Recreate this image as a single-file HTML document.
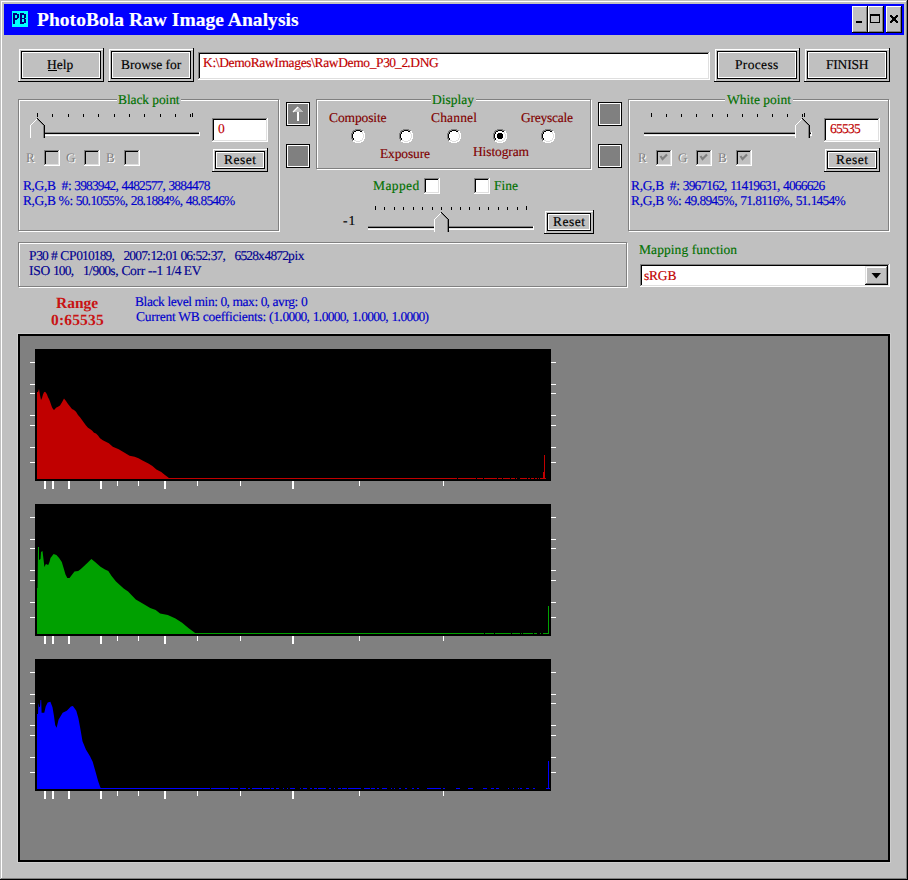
<!DOCTYPE html>
<html><head><meta charset="utf-8"><style>
html,body{margin:0;padding:0;}
body{width:908px;height:880px;position:relative;overflow:hidden;background:#c0c0c0;font-family:"Liberation Serif",serif;}
i{position:absolute;display:block;}
.t{position:absolute;white-space:pre;font-weight:normal;-webkit-text-stroke:0.15px currentColor;}
svg{overflow:visible}
</style></head><body>
<i style="left:0px;top:0px;width:908px;height:1px;background:#c0c0c0;"></i><i style="left:0px;top:0px;width:1px;height:880px;background:#c0c0c0;"></i><i style="left:1px;top:1px;width:906px;height:1px;background:#ffffff;"></i><i style="left:1px;top:1px;width:1px;height:878px;background:#ffffff;"></i><i style="left:0px;top:879px;width:908px;height:1px;background:#000000;"></i><i style="left:907px;top:0px;width:1px;height:880px;background:#000000;"></i><i style="left:1px;top:878px;width:906px;height:1px;background:#808080;"></i><i style="left:906px;top:1px;width:1px;height:878px;background:#808080;"></i><i style="left:4px;top:4px;width:900px;height:31px;background:#0000ff;"></i><i style="left:12px;top:11px;width:16px;height:16px;background:#00ffff;"></i><i style="left:13px;top:13px;width:2px;height:11px;background:#000080;"></i><i style="left:13px;top:13px;width:4px;height:1px;background:#000080;"></i><i style="left:13px;top:14px;width:6px;height:1px;background:#000080;"></i><i style="left:17px;top:15px;width:2px;height:3px;background:#000080;"></i><i style="left:13px;top:18px;width:5px;height:1px;background:#000080;"></i><i style="left:13px;top:19px;width:4px;height:1px;background:#000080;"></i><i style="left:20px;top:13px;width:2px;height:11px;background:#000080;"></i><i style="left:20px;top:13px;width:4px;height:1px;background:#000080;"></i><i style="left:20px;top:14px;width:6px;height:1px;background:#000080;"></i><i style="left:24px;top:15px;width:2px;height:3px;background:#000080;"></i><i style="left:20px;top:18px;width:5px;height:1px;background:#000080;"></i><i style="left:24px;top:19px;width:2px;height:3px;background:#000080;"></i><i style="left:20px;top:22px;width:6px;height:1px;background:#000080;"></i><i style="left:20px;top:23px;width:4px;height:1px;background:#000080;"></i><b class="t" style="left:37px;top:10px;color:#fff;font-size:19.5px;line-height:20px;font-weight:bold;letter-spacing:0.037px;">PhotoBola Raw Image Analysis</b><i style="left:852px;top:6px;width:16px;height:27px;background:#000000;"></i><i style="left:852px;top:6px;width:15px;height:26px;background:#ffffff;"></i><i style="left:853px;top:7px;width:14px;height:25px;background:#808080;"></i><i style="left:853px;top:7px;width:13px;height:24px;background:#c0c0c0;"></i><i style="left:868px;top:6px;width:16px;height:27px;background:#000000;"></i><i style="left:868px;top:6px;width:15px;height:26px;background:#ffffff;"></i><i style="left:869px;top:7px;width:14px;height:25px;background:#808080;"></i><i style="left:869px;top:7px;width:13px;height:24px;background:#c0c0c0;"></i><i style="left:886px;top:6px;width:16px;height:27px;background:#000000;"></i><i style="left:886px;top:6px;width:15px;height:26px;background:#ffffff;"></i><i style="left:887px;top:7px;width:14px;height:25px;background:#808080;"></i><i style="left:887px;top:7px;width:13px;height:24px;background:#c0c0c0;"></i><i style="left:856px;top:21px;width:6px;height:2px;background:#000000;"></i><i style="left:870px;top:14px;width:10px;height:1px;background:#000000;"></i><i style="left:870px;top:22px;width:10px;height:1px;background:#000000;"></i><i style="left:870px;top:14px;width:1px;height:9px;background:#000000;"></i><i style="left:879px;top:14px;width:1px;height:9px;background:#000000;"></i><i style="left:870px;top:15px;width:10px;height:1px;background:#000000;"></i><i style="left:890px;top:15px;width:1px;height:1px;background:#000000;"></i><i style="left:891px;top:15px;width:1px;height:1px;background:#000000;"></i><i style="left:896px;top:15px;width:1px;height:1px;background:#000000;"></i><i style="left:897px;top:15px;width:1px;height:1px;background:#000000;"></i><i style="left:890px;top:16px;width:1px;height:1px;background:#000000;"></i><i style="left:891px;top:16px;width:1px;height:1px;background:#000000;"></i><i style="left:892px;top:16px;width:1px;height:1px;background:#000000;"></i><i style="left:895px;top:16px;width:1px;height:1px;background:#000000;"></i><i style="left:896px;top:16px;width:1px;height:1px;background:#000000;"></i><i style="left:897px;top:16px;width:1px;height:1px;background:#000000;"></i><i style="left:891px;top:17px;width:1px;height:1px;background:#000000;"></i><i style="left:892px;top:17px;width:1px;height:1px;background:#000000;"></i><i style="left:893px;top:17px;width:1px;height:1px;background:#000000;"></i><i style="left:894px;top:17px;width:1px;height:1px;background:#000000;"></i><i style="left:895px;top:17px;width:1px;height:1px;background:#000000;"></i><i style="left:896px;top:17px;width:1px;height:1px;background:#000000;"></i><i style="left:892px;top:18px;width:1px;height:1px;background:#000000;"></i><i style="left:893px;top:18px;width:1px;height:1px;background:#000000;"></i><i style="left:894px;top:18px;width:1px;height:1px;background:#000000;"></i><i style="left:895px;top:18px;width:1px;height:1px;background:#000000;"></i><i style="left:892px;top:19px;width:1px;height:1px;background:#000000;"></i><i style="left:893px;top:19px;width:1px;height:1px;background:#000000;"></i><i style="left:894px;top:19px;width:1px;height:1px;background:#000000;"></i><i style="left:895px;top:19px;width:1px;height:1px;background:#000000;"></i><i style="left:891px;top:20px;width:1px;height:1px;background:#000000;"></i><i style="left:892px;top:20px;width:1px;height:1px;background:#000000;"></i><i style="left:893px;top:20px;width:1px;height:1px;background:#000000;"></i><i style="left:894px;top:20px;width:1px;height:1px;background:#000000;"></i><i style="left:895px;top:20px;width:1px;height:1px;background:#000000;"></i><i style="left:896px;top:20px;width:1px;height:1px;background:#000000;"></i><i style="left:890px;top:21px;width:1px;height:1px;background:#000000;"></i><i style="left:891px;top:21px;width:1px;height:1px;background:#000000;"></i><i style="left:892px;top:21px;width:1px;height:1px;background:#000000;"></i><i style="left:895px;top:21px;width:1px;height:1px;background:#000000;"></i><i style="left:896px;top:21px;width:1px;height:1px;background:#000000;"></i><i style="left:897px;top:21px;width:1px;height:1px;background:#000000;"></i><i style="left:890px;top:22px;width:1px;height:1px;background:#000000;"></i><i style="left:891px;top:22px;width:1px;height:1px;background:#000000;"></i><i style="left:896px;top:22px;width:1px;height:1px;background:#000000;"></i><i style="left:897px;top:22px;width:1px;height:1px;background:#000000;"></i><i style="left:18px;top:81px;width:86px;height:1px;background:#000000;"></i><i style="left:103px;top:48px;width:1px;height:34px;background:#000000;"></i><i style="left:19px;top:49px;width:84px;height:1px;background:#ffffff;"></i><i style="left:19px;top:49px;width:1px;height:32px;background:#ffffff;"></i><i style="left:21px;top:51px;width:80px;height:1px;background:#000000;"></i><i style="left:21px;top:78px;width:80px;height:1px;background:#000000;"></i><i style="left:21px;top:51px;width:1px;height:28px;background:#000000;"></i><i style="left:100px;top:51px;width:1px;height:28px;background:#000000;"></i><i style="left:22px;top:52px;width:78px;height:1px;background:#ffffff;"></i><i style="left:22px;top:77px;width:78px;height:1px;background:#ffffff;"></i><i style="left:22px;top:52px;width:1px;height:26px;background:#ffffff;"></i><i style="left:99px;top:52px;width:1px;height:26px;background:#ffffff;"></i><b class="t" style="left:47px;top:58px;color:#000;font-size:13.5px;line-height:14px;text-rendering:geometricPrecision;">Help</b><i style="left:48px;top:70px;width:9px;height:1px;background:#000000;"></i><i style="left:108px;top:81px;width:86px;height:1px;background:#000000;"></i><i style="left:193px;top:48px;width:1px;height:34px;background:#000000;"></i><i style="left:109px;top:49px;width:84px;height:1px;background:#ffffff;"></i><i style="left:109px;top:49px;width:1px;height:32px;background:#ffffff;"></i><i style="left:111px;top:51px;width:80px;height:1px;background:#000000;"></i><i style="left:111px;top:78px;width:80px;height:1px;background:#000000;"></i><i style="left:111px;top:51px;width:1px;height:28px;background:#000000;"></i><i style="left:190px;top:51px;width:1px;height:28px;background:#000000;"></i><i style="left:112px;top:52px;width:78px;height:1px;background:#ffffff;"></i><i style="left:112px;top:77px;width:78px;height:1px;background:#ffffff;"></i><i style="left:112px;top:52px;width:1px;height:26px;background:#ffffff;"></i><i style="left:189px;top:52px;width:1px;height:26px;background:#ffffff;"></i><b class="t" style="left:121px;top:58px;color:#000;font-size:13.5px;line-height:14px;text-rendering:geometricPrecision;">Browse for</b><i style="left:714px;top:81px;width:86px;height:1px;background:#000000;"></i><i style="left:799px;top:48px;width:1px;height:34px;background:#000000;"></i><i style="left:715px;top:49px;width:84px;height:1px;background:#ffffff;"></i><i style="left:715px;top:49px;width:1px;height:32px;background:#ffffff;"></i><i style="left:717px;top:51px;width:80px;height:1px;background:#000000;"></i><i style="left:717px;top:78px;width:80px;height:1px;background:#000000;"></i><i style="left:717px;top:51px;width:1px;height:28px;background:#000000;"></i><i style="left:796px;top:51px;width:1px;height:28px;background:#000000;"></i><i style="left:718px;top:52px;width:78px;height:1px;background:#ffffff;"></i><i style="left:718px;top:77px;width:78px;height:1px;background:#ffffff;"></i><i style="left:718px;top:52px;width:1px;height:26px;background:#ffffff;"></i><i style="left:795px;top:52px;width:1px;height:26px;background:#ffffff;"></i><b class="t" style="left:735px;top:58px;color:#000;font-size:13.5px;line-height:14px;letter-spacing:0.333px;text-rendering:geometricPrecision;">Process</b><i style="left:804px;top:81px;width:86px;height:1px;background:#000000;"></i><i style="left:889px;top:48px;width:1px;height:34px;background:#000000;"></i><i style="left:805px;top:49px;width:84px;height:1px;background:#ffffff;"></i><i style="left:805px;top:49px;width:1px;height:32px;background:#ffffff;"></i><i style="left:807px;top:51px;width:80px;height:1px;background:#000000;"></i><i style="left:807px;top:78px;width:80px;height:1px;background:#000000;"></i><i style="left:807px;top:51px;width:1px;height:28px;background:#000000;"></i><i style="left:886px;top:51px;width:1px;height:28px;background:#000000;"></i><i style="left:808px;top:52px;width:78px;height:1px;background:#ffffff;"></i><i style="left:808px;top:77px;width:78px;height:1px;background:#ffffff;"></i><i style="left:808px;top:52px;width:1px;height:26px;background:#ffffff;"></i><i style="left:885px;top:52px;width:1px;height:26px;background:#ffffff;"></i><b class="t" style="left:826px;top:58px;color:#000;font-size:13.5px;line-height:14px;letter-spacing:-0.2px;text-rendering:geometricPrecision;">FINISH</b><i style="left:198px;top:52px;width:512px;height:28px;background:#ffffff;"></i><i style="left:198px;top:52px;width:512px;height:1px;background:#808080;"></i><i style="left:198px;top:52px;width:1px;height:28px;background:#808080;"></i><i style="left:199px;top:53px;width:510px;height:1px;background:#000000;"></i><i style="left:199px;top:53px;width:1px;height:26px;background:#000000;"></i><i style="left:198px;top:79px;width:512px;height:1px;background:#ffffff;"></i><i style="left:709px;top:52px;width:1px;height:28px;background:#ffffff;"></i><i style="left:199px;top:78px;width:510px;height:1px;background:#dfdfdf;"></i><i style="left:708px;top:53px;width:1px;height:26px;background:#dfdfdf;"></i><b class="t" style="left:203px;top:56px;color:#c00000;font-size:13.5px;line-height:14px;letter-spacing:-0.364px;text-rendering:geometricPrecision;">K:\DemoRawImages\RawDemo_P<span style="letter-spacing:-0.864px">30</span>_<span style="letter-spacing:-0.864px">2</span>.DNG</b><i style="left:19px;top:100px;width:261px;height:1px;background:#ffffff;"></i><i style="left:19px;top:231px;width:261px;height:1px;background:#ffffff;"></i><i style="left:19px;top:100px;width:1px;height:132px;background:#ffffff;"></i><i style="left:279px;top:100px;width:1px;height:132px;background:#ffffff;"></i><i style="left:18px;top:99px;width:261px;height:1px;background:#808080;"></i><i style="left:18px;top:230px;width:261px;height:1px;background:#808080;"></i><i style="left:18px;top:99px;width:1px;height:132px;background:#808080;"></i><i style="left:278px;top:99px;width:1px;height:132px;background:#808080;"></i><i style="left:117px;top:99px;width:64px;height:2px;background:#c0c0c0;"></i><b class="t" style="left:118px;top:93px;color:#007000;font-size:13.5px;line-height:14px;letter-spacing:-0.1px;text-rendering:geometricPrecision;">Black point</b><i style="left:30px;top:132px;width:170px;height:1px;background:#808080;"></i><i style="left:30px;top:133px;width:170px;height:1px;background:#000000;"></i><i style="left:30px;top:134px;width:170px;height:1px;background:#dfdfdf;"></i><i style="left:30px;top:135px;width:170px;height:1px;background:#ffffff;"></i><i style="left:199px;top:132px;width:1px;height:4px;background:#ffffff;"></i><i style="left:37px;top:113px;width:1px;height:4px;background:#000000;"></i><i style="left:52px;top:114px;width:1px;height:3px;background:#000000;"></i><i style="left:68px;top:114px;width:1px;height:3px;background:#000000;"></i><i style="left:83px;top:114px;width:1px;height:3px;background:#000000;"></i><i style="left:98px;top:114px;width:1px;height:3px;background:#000000;"></i><i style="left:114px;top:114px;width:1px;height:3px;background:#000000;"></i><i style="left:129px;top:114px;width:1px;height:3px;background:#000000;"></i><i style="left:144px;top:114px;width:1px;height:3px;background:#000000;"></i><i style="left:160px;top:114px;width:1px;height:3px;background:#000000;"></i><i style="left:175px;top:114px;width:1px;height:3px;background:#000000;"></i><i style="left:190px;top:114px;width:1px;height:3px;background:#000000;"></i><i style="left:192px;top:113px;width:1px;height:4px;background:#000000;"></i><i style="left:30px;top:125px;width:15px;height:13px;background:#c0c0c0;"></i><i style="left:37px;top:118px;width:1px;height:1px;background:#c0c0c0;"></i><i style="left:36px;top:119px;width:3px;height:1px;background:#c0c0c0;"></i><i style="left:35px;top:120px;width:5px;height:1px;background:#c0c0c0;"></i><i style="left:34px;top:121px;width:7px;height:1px;background:#c0c0c0;"></i><i style="left:33px;top:122px;width:9px;height:1px;background:#c0c0c0;"></i><i style="left:32px;top:123px;width:11px;height:1px;background:#c0c0c0;"></i><i style="left:31px;top:124px;width:13px;height:1px;background:#c0c0c0;"></i><i style="left:37px;top:118px;width:1px;height:1px;background:#ffffff;"></i><i style="left:37px;top:118px;width:1px;height:1px;background:#000000;"></i><i style="left:36px;top:119px;width:1px;height:1px;background:#ffffff;"></i><i style="left:38px;top:119px;width:1px;height:1px;background:#000000;"></i><i style="left:37px;top:119px;width:1px;height:1px;background:#808080;"></i><i style="left:35px;top:120px;width:1px;height:1px;background:#ffffff;"></i><i style="left:39px;top:120px;width:1px;height:1px;background:#000000;"></i><i style="left:38px;top:120px;width:1px;height:1px;background:#808080;"></i><i style="left:34px;top:121px;width:1px;height:1px;background:#ffffff;"></i><i style="left:40px;top:121px;width:1px;height:1px;background:#000000;"></i><i style="left:39px;top:121px;width:1px;height:1px;background:#808080;"></i><i style="left:33px;top:122px;width:1px;height:1px;background:#ffffff;"></i><i style="left:41px;top:122px;width:1px;height:1px;background:#000000;"></i><i style="left:40px;top:122px;width:1px;height:1px;background:#808080;"></i><i style="left:32px;top:123px;width:1px;height:1px;background:#ffffff;"></i><i style="left:42px;top:123px;width:1px;height:1px;background:#000000;"></i><i style="left:41px;top:123px;width:1px;height:1px;background:#808080;"></i><i style="left:31px;top:124px;width:1px;height:1px;background:#ffffff;"></i><i style="left:43px;top:124px;width:1px;height:1px;background:#000000;"></i><i style="left:42px;top:124px;width:1px;height:1px;background:#808080;"></i><i style="left:30px;top:125px;width:1px;height:1px;background:#ffffff;"></i><i style="left:44px;top:125px;width:1px;height:1px;background:#000000;"></i><i style="left:43px;top:125px;width:1px;height:1px;background:#808080;"></i><i style="left:30px;top:125px;width:1px;height:13px;background:#ffffff;"></i><i style="left:44px;top:125px;width:1px;height:13px;background:#000000;"></i><i style="left:43px;top:126px;width:1px;height:12px;background:#808080;"></i><i style="left:212px;top:118px;width:56px;height:24px;background:#ffffff;"></i><i style="left:212px;top:118px;width:56px;height:1px;background:#808080;"></i><i style="left:212px;top:118px;width:1px;height:24px;background:#808080;"></i><i style="left:213px;top:119px;width:54px;height:1px;background:#000000;"></i><i style="left:213px;top:119px;width:1px;height:22px;background:#000000;"></i><i style="left:212px;top:141px;width:56px;height:1px;background:#ffffff;"></i><i style="left:267px;top:118px;width:1px;height:24px;background:#ffffff;"></i><i style="left:213px;top:140px;width:54px;height:1px;background:#dfdfdf;"></i><i style="left:266px;top:119px;width:1px;height:22px;background:#dfdfdf;"></i><b class="t" style="left:218px;top:122px;color:#c00000;font-size:13.5px;line-height:14px;letter-spacing:2.0px;text-rendering:geometricPrecision;">0</b><i style="left:212px;top:171px;width:56px;height:1px;background:#000000;"></i><i style="left:267px;top:148px;width:1px;height:24px;background:#000000;"></i><i style="left:213px;top:149px;width:54px;height:1px;background:#ffffff;"></i><i style="left:213px;top:149px;width:1px;height:22px;background:#ffffff;"></i><i style="left:215px;top:151px;width:50px;height:1px;background:#000000;"></i><i style="left:215px;top:168px;width:50px;height:1px;background:#000000;"></i><i style="left:215px;top:151px;width:1px;height:18px;background:#000000;"></i><i style="left:264px;top:151px;width:1px;height:18px;background:#000000;"></i><i style="left:216px;top:152px;width:48px;height:1px;background:#ffffff;"></i><i style="left:216px;top:167px;width:48px;height:1px;background:#ffffff;"></i><i style="left:216px;top:152px;width:1px;height:16px;background:#ffffff;"></i><i style="left:263px;top:152px;width:1px;height:16px;background:#ffffff;"></i><b class="t" style="left:224px;top:153px;color:#000;font-size:13.5px;line-height:14px;letter-spacing:0.5px;text-rendering:geometricPrecision;">Reset</b><b class="t" style="left:27px;top:152px;color:#ffffff;font-size:13px;line-height:13px;-webkit-text-stroke:0;text-rendering:geometricPrecision;">R</b><b class="t" style="left:26px;top:151px;color:#808080;font-size:13px;line-height:13px;-webkit-text-stroke:0;text-rendering:geometricPrecision;">R</b><i style="left:44px;top:150px;width:16px;height:16px;background:#c0c0c0;"></i><i style="left:44px;top:150px;width:16px;height:1px;background:#808080;"></i><i style="left:44px;top:150px;width:1px;height:16px;background:#808080;"></i><i style="left:45px;top:151px;width:14px;height:1px;background:#000000;"></i><i style="left:45px;top:151px;width:1px;height:14px;background:#000000;"></i><i style="left:44px;top:165px;width:16px;height:1px;background:#ffffff;"></i><i style="left:59px;top:150px;width:1px;height:16px;background:#ffffff;"></i><i style="left:45px;top:164px;width:14px;height:1px;background:#dfdfdf;"></i><i style="left:58px;top:151px;width:1px;height:14px;background:#dfdfdf;"></i><b class="t" style="left:67px;top:152px;color:#ffffff;font-size:13px;line-height:13px;-webkit-text-stroke:0;text-rendering:geometricPrecision;">G</b><b class="t" style="left:66px;top:151px;color:#808080;font-size:13px;line-height:13px;-webkit-text-stroke:0;text-rendering:geometricPrecision;">G</b><i style="left:84px;top:150px;width:16px;height:16px;background:#c0c0c0;"></i><i style="left:84px;top:150px;width:16px;height:1px;background:#808080;"></i><i style="left:84px;top:150px;width:1px;height:16px;background:#808080;"></i><i style="left:85px;top:151px;width:14px;height:1px;background:#000000;"></i><i style="left:85px;top:151px;width:1px;height:14px;background:#000000;"></i><i style="left:84px;top:165px;width:16px;height:1px;background:#ffffff;"></i><i style="left:99px;top:150px;width:1px;height:16px;background:#ffffff;"></i><i style="left:85px;top:164px;width:14px;height:1px;background:#dfdfdf;"></i><i style="left:98px;top:151px;width:1px;height:14px;background:#dfdfdf;"></i><b class="t" style="left:107px;top:152px;color:#ffffff;font-size:13px;line-height:13px;-webkit-text-stroke:0;text-rendering:geometricPrecision;">B</b><b class="t" style="left:106px;top:151px;color:#808080;font-size:13px;line-height:13px;-webkit-text-stroke:0;text-rendering:geometricPrecision;">B</b><i style="left:124px;top:150px;width:16px;height:16px;background:#c0c0c0;"></i><i style="left:124px;top:150px;width:16px;height:1px;background:#808080;"></i><i style="left:124px;top:150px;width:1px;height:16px;background:#808080;"></i><i style="left:125px;top:151px;width:14px;height:1px;background:#000000;"></i><i style="left:125px;top:151px;width:1px;height:14px;background:#000000;"></i><i style="left:124px;top:165px;width:16px;height:1px;background:#ffffff;"></i><i style="left:139px;top:150px;width:1px;height:16px;background:#ffffff;"></i><i style="left:125px;top:164px;width:14px;height:1px;background:#dfdfdf;"></i><i style="left:138px;top:151px;width:1px;height:14px;background:#dfdfdf;"></i><b class="t" style="left:23px;top:179px;color:#0000cc;font-size:13.5px;line-height:14px;letter-spacing:-0.382px;text-rendering:geometricPrecision;">R,G,B  #: <span style="letter-spacing:-0.882px">3983942</span>, <span style="letter-spacing:-0.882px">4482577</span>, <span style="letter-spacing:-0.882px">3884478</span></b><b class="t" style="left:23px;top:194px;color:#0000cc;font-size:13.5px;line-height:14px;letter-spacing:-0.389px;text-rendering:geometricPrecision;">R,G,B %: <span style="letter-spacing:-0.889px">50</span>.<span style="letter-spacing:-0.889px">1055</span>%, <span style="letter-spacing:-0.889px">28</span>.<span style="letter-spacing:-0.889px">1884</span>%, <span style="letter-spacing:-0.889px">48</span>.<span style="letter-spacing:-0.889px">8546</span>%</b><i style="left:286px;top:102px;width:24px;height:24px;background:#000000;"></i><i style="left:287px;top:103px;width:22px;height:22px;background:#ffffff;"></i><i style="left:288px;top:104px;width:20px;height:20px;background:#808080;"></i><i style="left:286px;top:144px;width:24px;height:24px;background:#000000;"></i><i style="left:287px;top:145px;width:22px;height:22px;background:#ffffff;"></i><i style="left:288px;top:146px;width:20px;height:20px;background:#808080;"></i><i style="left:598px;top:102px;width:24px;height:24px;background:#000000;"></i><i style="left:599px;top:103px;width:22px;height:22px;background:#ffffff;"></i><i style="left:600px;top:104px;width:20px;height:20px;background:#808080;"></i><i style="left:598px;top:144px;width:24px;height:24px;background:#000000;"></i><i style="left:599px;top:145px;width:22px;height:22px;background:#ffffff;"></i><i style="left:600px;top:146px;width:20px;height:20px;background:#808080;"></i><svg style="position:absolute;left:288px;top:104px" width="20" height="20" shape-rendering="crispEdges"><polygon points="10,3 15,8 5,8" fill="#c0c0c0"/><path d="M10 3 L5 8" stroke="#fff" stroke-width="1.2" fill="none" shape-rendering="auto"/><rect x="9" y="8" width="2" height="9" fill="#fff"/></svg><i style="left:317px;top:100px;width:275px;height:1px;background:#ffffff;"></i><i style="left:317px;top:169px;width:275px;height:1px;background:#ffffff;"></i><i style="left:317px;top:100px;width:1px;height:70px;background:#ffffff;"></i><i style="left:591px;top:100px;width:1px;height:70px;background:#ffffff;"></i><i style="left:316px;top:99px;width:275px;height:1px;background:#808080;"></i><i style="left:316px;top:168px;width:275px;height:1px;background:#808080;"></i><i style="left:316px;top:99px;width:1px;height:70px;background:#808080;"></i><i style="left:590px;top:99px;width:1px;height:70px;background:#808080;"></i><i style="left:431px;top:99px;width:45px;height:2px;background:#c0c0c0;"></i><b class="t" style="left:432px;top:93px;color:#007000;font-size:13.5px;line-height:14px;text-rendering:geometricPrecision;">Display</b><b class="t" style="left:329px;top:111px;color:#800000;font-size:13.5px;line-height:14px;letter-spacing:-0.125px;text-rendering:geometricPrecision;">Composite</b><b class="t" style="left:431px;top:111px;color:#800000;font-size:13.5px;line-height:14px;letter-spacing:0.167px;text-rendering:geometricPrecision;">Channel</b><b class="t" style="left:521px;top:111px;color:#800000;font-size:13.5px;line-height:14px;letter-spacing:-0.25px;text-rendering:geometricPrecision;">Greyscale</b><b class="t" style="left:380px;top:147px;color:#800000;font-size:13.5px;line-height:14px;letter-spacing:-0.143px;text-rendering:geometricPrecision;">Exposure</b><b class="t" style="left:473px;top:145px;color:#800000;font-size:13.5px;line-height:14px;letter-spacing:-0.125px;text-rendering:geometricPrecision;">Histogram</b><svg style="position:absolute;left:350px;top:128px" width="16" height="16" shape-rendering="crispEdges"><rect x="5" y="1" width="1" height="1" fill="#808080"/><rect x="6" y="1" width="1" height="1" fill="#808080"/><rect x="7" y="1" width="1" height="1" fill="#808080"/><rect x="8" y="1" width="1" height="1" fill="#808080"/><rect x="9" y="1" width="1" height="1" fill="#808080"/><rect x="10" y="1" width="1" height="1" fill="#808080"/><rect x="3" y="2" width="1" height="1" fill="#808080"/><rect x="4" y="2" width="1" height="1" fill="#808080"/><rect x="5" y="2" width="1" height="1" fill="#808080"/><rect x="6" y="2" width="1" height="1" fill="#000000"/><rect x="7" y="2" width="1" height="1" fill="#000000"/><rect x="8" y="2" width="1" height="1" fill="#000000"/><rect x="9" y="2" width="1" height="1" fill="#000000"/><rect x="10" y="2" width="1" height="1" fill="#808080"/><rect x="11" y="2" width="1" height="1" fill="#808080"/><rect x="12" y="2" width="1" height="1" fill="#808080"/><rect x="2" y="3" width="1" height="1" fill="#808080"/><rect x="3" y="3" width="1" height="1" fill="#808080"/><rect x="4" y="3" width="1" height="1" fill="#000000"/><rect x="5" y="3" width="1" height="1" fill="#000000"/><rect x="6" y="3" width="1" height="1" fill="#ffffff"/><rect x="7" y="3" width="1" height="1" fill="#ffffff"/><rect x="8" y="3" width="1" height="1" fill="#ffffff"/><rect x="9" y="3" width="1" height="1" fill="#ffffff"/><rect x="10" y="3" width="1" height="1" fill="#000000"/><rect x="11" y="3" width="1" height="1" fill="#000000"/><rect x="12" y="3" width="1" height="1" fill="#ffffff"/><rect x="13" y="3" width="1" height="1" fill="#ffffff"/><rect x="2" y="4" width="1" height="1" fill="#808080"/><rect x="3" y="4" width="1" height="1" fill="#000000"/><rect x="4" y="4" width="1" height="1" fill="#ffffff"/><rect x="5" y="4" width="1" height="1" fill="#ffffff"/><rect x="6" y="4" width="1" height="1" fill="#ffffff"/><rect x="7" y="4" width="1" height="1" fill="#ffffff"/><rect x="8" y="4" width="1" height="1" fill="#ffffff"/><rect x="9" y="4" width="1" height="1" fill="#ffffff"/><rect x="10" y="4" width="1" height="1" fill="#ffffff"/><rect x="11" y="4" width="1" height="1" fill="#ffffff"/><rect x="12" y="4" width="1" height="1" fill="#dfdfdf"/><rect x="13" y="4" width="1" height="1" fill="#ffffff"/><rect x="1" y="5" width="1" height="1" fill="#808080"/><rect x="2" y="5" width="1" height="1" fill="#808080"/><rect x="3" y="5" width="1" height="1" fill="#000000"/><rect x="4" y="5" width="1" height="1" fill="#ffffff"/><rect x="5" y="5" width="1" height="1" fill="#ffffff"/><rect x="6" y="5" width="1" height="1" fill="#ffffff"/><rect x="7" y="5" width="1" height="1" fill="#ffffff"/><rect x="8" y="5" width="1" height="1" fill="#ffffff"/><rect x="9" y="5" width="1" height="1" fill="#ffffff"/><rect x="10" y="5" width="1" height="1" fill="#ffffff"/><rect x="11" y="5" width="1" height="1" fill="#ffffff"/><rect x="12" y="5" width="1" height="1" fill="#dfdfdf"/><rect x="13" y="5" width="1" height="1" fill="#ffffff"/><rect x="14" y="5" width="1" height="1" fill="#ffffff"/><rect x="1" y="6" width="1" height="1" fill="#808080"/><rect x="2" y="6" width="1" height="1" fill="#000000"/><rect x="3" y="6" width="1" height="1" fill="#ffffff"/><rect x="4" y="6" width="1" height="1" fill="#ffffff"/><rect x="5" y="6" width="1" height="1" fill="#ffffff"/><rect x="6" y="6" width="1" height="1" fill="#ffffff"/><rect x="7" y="6" width="1" height="1" fill="#ffffff"/><rect x="8" y="6" width="1" height="1" fill="#ffffff"/><rect x="9" y="6" width="1" height="1" fill="#ffffff"/><rect x="10" y="6" width="1" height="1" fill="#ffffff"/><rect x="11" y="6" width="1" height="1" fill="#ffffff"/><rect x="12" y="6" width="1" height="1" fill="#ffffff"/><rect x="13" y="6" width="1" height="1" fill="#dfdfdf"/><rect x="14" y="6" width="1" height="1" fill="#ffffff"/><rect x="1" y="7" width="1" height="1" fill="#808080"/><rect x="2" y="7" width="1" height="1" fill="#000000"/><rect x="3" y="7" width="1" height="1" fill="#ffffff"/><rect x="4" y="7" width="1" height="1" fill="#ffffff"/><rect x="5" y="7" width="1" height="1" fill="#ffffff"/><rect x="6" y="7" width="1" height="1" fill="#ffffff"/><rect x="7" y="7" width="1" height="1" fill="#ffffff"/><rect x="8" y="7" width="1" height="1" fill="#ffffff"/><rect x="9" y="7" width="1" height="1" fill="#ffffff"/><rect x="10" y="7" width="1" height="1" fill="#ffffff"/><rect x="11" y="7" width="1" height="1" fill="#ffffff"/><rect x="12" y="7" width="1" height="1" fill="#ffffff"/><rect x="13" y="7" width="1" height="1" fill="#dfdfdf"/><rect x="14" y="7" width="1" height="1" fill="#ffffff"/><rect x="1" y="8" width="1" height="1" fill="#808080"/><rect x="2" y="8" width="1" height="1" fill="#000000"/><rect x="3" y="8" width="1" height="1" fill="#ffffff"/><rect x="4" y="8" width="1" height="1" fill="#ffffff"/><rect x="5" y="8" width="1" height="1" fill="#ffffff"/><rect x="6" y="8" width="1" height="1" fill="#ffffff"/><rect x="7" y="8" width="1" height="1" fill="#ffffff"/><rect x="8" y="8" width="1" height="1" fill="#ffffff"/><rect x="9" y="8" width="1" height="1" fill="#ffffff"/><rect x="10" y="8" width="1" height="1" fill="#ffffff"/><rect x="11" y="8" width="1" height="1" fill="#ffffff"/><rect x="12" y="8" width="1" height="1" fill="#ffffff"/><rect x="13" y="8" width="1" height="1" fill="#dfdfdf"/><rect x="14" y="8" width="1" height="1" fill="#ffffff"/><rect x="1" y="9" width="1" height="1" fill="#808080"/><rect x="2" y="9" width="1" height="1" fill="#000000"/><rect x="3" y="9" width="1" height="1" fill="#ffffff"/><rect x="4" y="9" width="1" height="1" fill="#ffffff"/><rect x="5" y="9" width="1" height="1" fill="#ffffff"/><rect x="6" y="9" width="1" height="1" fill="#ffffff"/><rect x="7" y="9" width="1" height="1" fill="#ffffff"/><rect x="8" y="9" width="1" height="1" fill="#ffffff"/><rect x="9" y="9" width="1" height="1" fill="#ffffff"/><rect x="10" y="9" width="1" height="1" fill="#ffffff"/><rect x="11" y="9" width="1" height="1" fill="#ffffff"/><rect x="12" y="9" width="1" height="1" fill="#ffffff"/><rect x="13" y="9" width="1" height="1" fill="#dfdfdf"/><rect x="14" y="9" width="1" height="1" fill="#ffffff"/><rect x="1" y="10" width="1" height="1" fill="#808080"/><rect x="2" y="10" width="1" height="1" fill="#808080"/><rect x="3" y="10" width="1" height="1" fill="#000000"/><rect x="4" y="10" width="1" height="1" fill="#ffffff"/><rect x="5" y="10" width="1" height="1" fill="#ffffff"/><rect x="6" y="10" width="1" height="1" fill="#ffffff"/><rect x="7" y="10" width="1" height="1" fill="#ffffff"/><rect x="8" y="10" width="1" height="1" fill="#ffffff"/><rect x="9" y="10" width="1" height="1" fill="#ffffff"/><rect x="10" y="10" width="1" height="1" fill="#ffffff"/><rect x="11" y="10" width="1" height="1" fill="#ffffff"/><rect x="12" y="10" width="1" height="1" fill="#dfdfdf"/><rect x="13" y="10" width="1" height="1" fill="#ffffff"/><rect x="14" y="10" width="1" height="1" fill="#ffffff"/><rect x="2" y="11" width="1" height="1" fill="#808080"/><rect x="3" y="11" width="1" height="1" fill="#000000"/><rect x="4" y="11" width="1" height="1" fill="#ffffff"/><rect x="5" y="11" width="1" height="1" fill="#ffffff"/><rect x="6" y="11" width="1" height="1" fill="#ffffff"/><rect x="7" y="11" width="1" height="1" fill="#ffffff"/><rect x="8" y="11" width="1" height="1" fill="#ffffff"/><rect x="9" y="11" width="1" height="1" fill="#ffffff"/><rect x="10" y="11" width="1" height="1" fill="#ffffff"/><rect x="11" y="11" width="1" height="1" fill="#ffffff"/><rect x="12" y="11" width="1" height="1" fill="#dfdfdf"/><rect x="13" y="11" width="1" height="1" fill="#ffffff"/><rect x="2" y="12" width="1" height="1" fill="#808080"/><rect x="3" y="12" width="1" height="1" fill="#ffffff"/><rect x="4" y="12" width="1" height="1" fill="#dfdfdf"/><rect x="5" y="12" width="1" height="1" fill="#dfdfdf"/><rect x="6" y="12" width="1" height="1" fill="#ffffff"/><rect x="7" y="12" width="1" height="1" fill="#ffffff"/><rect x="8" y="12" width="1" height="1" fill="#ffffff"/><rect x="9" y="12" width="1" height="1" fill="#ffffff"/><rect x="10" y="12" width="1" height="1" fill="#dfdfdf"/><rect x="11" y="12" width="1" height="1" fill="#dfdfdf"/><rect x="12" y="12" width="1" height="1" fill="#ffffff"/><rect x="13" y="12" width="1" height="1" fill="#ffffff"/><rect x="3" y="13" width="1" height="1" fill="#ffffff"/><rect x="4" y="13" width="1" height="1" fill="#ffffff"/><rect x="5" y="13" width="1" height="1" fill="#ffffff"/><rect x="6" y="13" width="1" height="1" fill="#dfdfdf"/><rect x="7" y="13" width="1" height="1" fill="#dfdfdf"/><rect x="8" y="13" width="1" height="1" fill="#dfdfdf"/><rect x="9" y="13" width="1" height="1" fill="#dfdfdf"/><rect x="10" y="13" width="1" height="1" fill="#ffffff"/><rect x="11" y="13" width="1" height="1" fill="#ffffff"/><rect x="12" y="13" width="1" height="1" fill="#ffffff"/><rect x="5" y="14" width="1" height="1" fill="#ffffff"/><rect x="6" y="14" width="1" height="1" fill="#ffffff"/><rect x="7" y="14" width="1" height="1" fill="#ffffff"/><rect x="8" y="14" width="1" height="1" fill="#ffffff"/><rect x="9" y="14" width="1" height="1" fill="#ffffff"/><rect x="10" y="14" width="1" height="1" fill="#ffffff"/></svg><svg style="position:absolute;left:398px;top:128px" width="16" height="16" shape-rendering="crispEdges"><rect x="5" y="1" width="1" height="1" fill="#808080"/><rect x="6" y="1" width="1" height="1" fill="#808080"/><rect x="7" y="1" width="1" height="1" fill="#808080"/><rect x="8" y="1" width="1" height="1" fill="#808080"/><rect x="9" y="1" width="1" height="1" fill="#808080"/><rect x="10" y="1" width="1" height="1" fill="#808080"/><rect x="3" y="2" width="1" height="1" fill="#808080"/><rect x="4" y="2" width="1" height="1" fill="#808080"/><rect x="5" y="2" width="1" height="1" fill="#808080"/><rect x="6" y="2" width="1" height="1" fill="#000000"/><rect x="7" y="2" width="1" height="1" fill="#000000"/><rect x="8" y="2" width="1" height="1" fill="#000000"/><rect x="9" y="2" width="1" height="1" fill="#000000"/><rect x="10" y="2" width="1" height="1" fill="#808080"/><rect x="11" y="2" width="1" height="1" fill="#808080"/><rect x="12" y="2" width="1" height="1" fill="#808080"/><rect x="2" y="3" width="1" height="1" fill="#808080"/><rect x="3" y="3" width="1" height="1" fill="#808080"/><rect x="4" y="3" width="1" height="1" fill="#000000"/><rect x="5" y="3" width="1" height="1" fill="#000000"/><rect x="6" y="3" width="1" height="1" fill="#ffffff"/><rect x="7" y="3" width="1" height="1" fill="#ffffff"/><rect x="8" y="3" width="1" height="1" fill="#ffffff"/><rect x="9" y="3" width="1" height="1" fill="#ffffff"/><rect x="10" y="3" width="1" height="1" fill="#000000"/><rect x="11" y="3" width="1" height="1" fill="#000000"/><rect x="12" y="3" width="1" height="1" fill="#ffffff"/><rect x="13" y="3" width="1" height="1" fill="#ffffff"/><rect x="2" y="4" width="1" height="1" fill="#808080"/><rect x="3" y="4" width="1" height="1" fill="#000000"/><rect x="4" y="4" width="1" height="1" fill="#ffffff"/><rect x="5" y="4" width="1" height="1" fill="#ffffff"/><rect x="6" y="4" width="1" height="1" fill="#ffffff"/><rect x="7" y="4" width="1" height="1" fill="#ffffff"/><rect x="8" y="4" width="1" height="1" fill="#ffffff"/><rect x="9" y="4" width="1" height="1" fill="#ffffff"/><rect x="10" y="4" width="1" height="1" fill="#ffffff"/><rect x="11" y="4" width="1" height="1" fill="#ffffff"/><rect x="12" y="4" width="1" height="1" fill="#dfdfdf"/><rect x="13" y="4" width="1" height="1" fill="#ffffff"/><rect x="1" y="5" width="1" height="1" fill="#808080"/><rect x="2" y="5" width="1" height="1" fill="#808080"/><rect x="3" y="5" width="1" height="1" fill="#000000"/><rect x="4" y="5" width="1" height="1" fill="#ffffff"/><rect x="5" y="5" width="1" height="1" fill="#ffffff"/><rect x="6" y="5" width="1" height="1" fill="#ffffff"/><rect x="7" y="5" width="1" height="1" fill="#ffffff"/><rect x="8" y="5" width="1" height="1" fill="#ffffff"/><rect x="9" y="5" width="1" height="1" fill="#ffffff"/><rect x="10" y="5" width="1" height="1" fill="#ffffff"/><rect x="11" y="5" width="1" height="1" fill="#ffffff"/><rect x="12" y="5" width="1" height="1" fill="#dfdfdf"/><rect x="13" y="5" width="1" height="1" fill="#ffffff"/><rect x="14" y="5" width="1" height="1" fill="#ffffff"/><rect x="1" y="6" width="1" height="1" fill="#808080"/><rect x="2" y="6" width="1" height="1" fill="#000000"/><rect x="3" y="6" width="1" height="1" fill="#ffffff"/><rect x="4" y="6" width="1" height="1" fill="#ffffff"/><rect x="5" y="6" width="1" height="1" fill="#ffffff"/><rect x="6" y="6" width="1" height="1" fill="#ffffff"/><rect x="7" y="6" width="1" height="1" fill="#ffffff"/><rect x="8" y="6" width="1" height="1" fill="#ffffff"/><rect x="9" y="6" width="1" height="1" fill="#ffffff"/><rect x="10" y="6" width="1" height="1" fill="#ffffff"/><rect x="11" y="6" width="1" height="1" fill="#ffffff"/><rect x="12" y="6" width="1" height="1" fill="#ffffff"/><rect x="13" y="6" width="1" height="1" fill="#dfdfdf"/><rect x="14" y="6" width="1" height="1" fill="#ffffff"/><rect x="1" y="7" width="1" height="1" fill="#808080"/><rect x="2" y="7" width="1" height="1" fill="#000000"/><rect x="3" y="7" width="1" height="1" fill="#ffffff"/><rect x="4" y="7" width="1" height="1" fill="#ffffff"/><rect x="5" y="7" width="1" height="1" fill="#ffffff"/><rect x="6" y="7" width="1" height="1" fill="#ffffff"/><rect x="7" y="7" width="1" height="1" fill="#ffffff"/><rect x="8" y="7" width="1" height="1" fill="#ffffff"/><rect x="9" y="7" width="1" height="1" fill="#ffffff"/><rect x="10" y="7" width="1" height="1" fill="#ffffff"/><rect x="11" y="7" width="1" height="1" fill="#ffffff"/><rect x="12" y="7" width="1" height="1" fill="#ffffff"/><rect x="13" y="7" width="1" height="1" fill="#dfdfdf"/><rect x="14" y="7" width="1" height="1" fill="#ffffff"/><rect x="1" y="8" width="1" height="1" fill="#808080"/><rect x="2" y="8" width="1" height="1" fill="#000000"/><rect x="3" y="8" width="1" height="1" fill="#ffffff"/><rect x="4" y="8" width="1" height="1" fill="#ffffff"/><rect x="5" y="8" width="1" height="1" fill="#ffffff"/><rect x="6" y="8" width="1" height="1" fill="#ffffff"/><rect x="7" y="8" width="1" height="1" fill="#ffffff"/><rect x="8" y="8" width="1" height="1" fill="#ffffff"/><rect x="9" y="8" width="1" height="1" fill="#ffffff"/><rect x="10" y="8" width="1" height="1" fill="#ffffff"/><rect x="11" y="8" width="1" height="1" fill="#ffffff"/><rect x="12" y="8" width="1" height="1" fill="#ffffff"/><rect x="13" y="8" width="1" height="1" fill="#dfdfdf"/><rect x="14" y="8" width="1" height="1" fill="#ffffff"/><rect x="1" y="9" width="1" height="1" fill="#808080"/><rect x="2" y="9" width="1" height="1" fill="#000000"/><rect x="3" y="9" width="1" height="1" fill="#ffffff"/><rect x="4" y="9" width="1" height="1" fill="#ffffff"/><rect x="5" y="9" width="1" height="1" fill="#ffffff"/><rect x="6" y="9" width="1" height="1" fill="#ffffff"/><rect x="7" y="9" width="1" height="1" fill="#ffffff"/><rect x="8" y="9" width="1" height="1" fill="#ffffff"/><rect x="9" y="9" width="1" height="1" fill="#ffffff"/><rect x="10" y="9" width="1" height="1" fill="#ffffff"/><rect x="11" y="9" width="1" height="1" fill="#ffffff"/><rect x="12" y="9" width="1" height="1" fill="#ffffff"/><rect x="13" y="9" width="1" height="1" fill="#dfdfdf"/><rect x="14" y="9" width="1" height="1" fill="#ffffff"/><rect x="1" y="10" width="1" height="1" fill="#808080"/><rect x="2" y="10" width="1" height="1" fill="#808080"/><rect x="3" y="10" width="1" height="1" fill="#000000"/><rect x="4" y="10" width="1" height="1" fill="#ffffff"/><rect x="5" y="10" width="1" height="1" fill="#ffffff"/><rect x="6" y="10" width="1" height="1" fill="#ffffff"/><rect x="7" y="10" width="1" height="1" fill="#ffffff"/><rect x="8" y="10" width="1" height="1" fill="#ffffff"/><rect x="9" y="10" width="1" height="1" fill="#ffffff"/><rect x="10" y="10" width="1" height="1" fill="#ffffff"/><rect x="11" y="10" width="1" height="1" fill="#ffffff"/><rect x="12" y="10" width="1" height="1" fill="#dfdfdf"/><rect x="13" y="10" width="1" height="1" fill="#ffffff"/><rect x="14" y="10" width="1" height="1" fill="#ffffff"/><rect x="2" y="11" width="1" height="1" fill="#808080"/><rect x="3" y="11" width="1" height="1" fill="#000000"/><rect x="4" y="11" width="1" height="1" fill="#ffffff"/><rect x="5" y="11" width="1" height="1" fill="#ffffff"/><rect x="6" y="11" width="1" height="1" fill="#ffffff"/><rect x="7" y="11" width="1" height="1" fill="#ffffff"/><rect x="8" y="11" width="1" height="1" fill="#ffffff"/><rect x="9" y="11" width="1" height="1" fill="#ffffff"/><rect x="10" y="11" width="1" height="1" fill="#ffffff"/><rect x="11" y="11" width="1" height="1" fill="#ffffff"/><rect x="12" y="11" width="1" height="1" fill="#dfdfdf"/><rect x="13" y="11" width="1" height="1" fill="#ffffff"/><rect x="2" y="12" width="1" height="1" fill="#808080"/><rect x="3" y="12" width="1" height="1" fill="#ffffff"/><rect x="4" y="12" width="1" height="1" fill="#dfdfdf"/><rect x="5" y="12" width="1" height="1" fill="#dfdfdf"/><rect x="6" y="12" width="1" height="1" fill="#ffffff"/><rect x="7" y="12" width="1" height="1" fill="#ffffff"/><rect x="8" y="12" width="1" height="1" fill="#ffffff"/><rect x="9" y="12" width="1" height="1" fill="#ffffff"/><rect x="10" y="12" width="1" height="1" fill="#dfdfdf"/><rect x="11" y="12" width="1" height="1" fill="#dfdfdf"/><rect x="12" y="12" width="1" height="1" fill="#ffffff"/><rect x="13" y="12" width="1" height="1" fill="#ffffff"/><rect x="3" y="13" width="1" height="1" fill="#ffffff"/><rect x="4" y="13" width="1" height="1" fill="#ffffff"/><rect x="5" y="13" width="1" height="1" fill="#ffffff"/><rect x="6" y="13" width="1" height="1" fill="#dfdfdf"/><rect x="7" y="13" width="1" height="1" fill="#dfdfdf"/><rect x="8" y="13" width="1" height="1" fill="#dfdfdf"/><rect x="9" y="13" width="1" height="1" fill="#dfdfdf"/><rect x="10" y="13" width="1" height="1" fill="#ffffff"/><rect x="11" y="13" width="1" height="1" fill="#ffffff"/><rect x="12" y="13" width="1" height="1" fill="#ffffff"/><rect x="5" y="14" width="1" height="1" fill="#ffffff"/><rect x="6" y="14" width="1" height="1" fill="#ffffff"/><rect x="7" y="14" width="1" height="1" fill="#ffffff"/><rect x="8" y="14" width="1" height="1" fill="#ffffff"/><rect x="9" y="14" width="1" height="1" fill="#ffffff"/><rect x="10" y="14" width="1" height="1" fill="#ffffff"/></svg><svg style="position:absolute;left:446px;top:128px" width="16" height="16" shape-rendering="crispEdges"><rect x="5" y="1" width="1" height="1" fill="#808080"/><rect x="6" y="1" width="1" height="1" fill="#808080"/><rect x="7" y="1" width="1" height="1" fill="#808080"/><rect x="8" y="1" width="1" height="1" fill="#808080"/><rect x="9" y="1" width="1" height="1" fill="#808080"/><rect x="10" y="1" width="1" height="1" fill="#808080"/><rect x="3" y="2" width="1" height="1" fill="#808080"/><rect x="4" y="2" width="1" height="1" fill="#808080"/><rect x="5" y="2" width="1" height="1" fill="#808080"/><rect x="6" y="2" width="1" height="1" fill="#000000"/><rect x="7" y="2" width="1" height="1" fill="#000000"/><rect x="8" y="2" width="1" height="1" fill="#000000"/><rect x="9" y="2" width="1" height="1" fill="#000000"/><rect x="10" y="2" width="1" height="1" fill="#808080"/><rect x="11" y="2" width="1" height="1" fill="#808080"/><rect x="12" y="2" width="1" height="1" fill="#808080"/><rect x="2" y="3" width="1" height="1" fill="#808080"/><rect x="3" y="3" width="1" height="1" fill="#808080"/><rect x="4" y="3" width="1" height="1" fill="#000000"/><rect x="5" y="3" width="1" height="1" fill="#000000"/><rect x="6" y="3" width="1" height="1" fill="#ffffff"/><rect x="7" y="3" width="1" height="1" fill="#ffffff"/><rect x="8" y="3" width="1" height="1" fill="#ffffff"/><rect x="9" y="3" width="1" height="1" fill="#ffffff"/><rect x="10" y="3" width="1" height="1" fill="#000000"/><rect x="11" y="3" width="1" height="1" fill="#000000"/><rect x="12" y="3" width="1" height="1" fill="#ffffff"/><rect x="13" y="3" width="1" height="1" fill="#ffffff"/><rect x="2" y="4" width="1" height="1" fill="#808080"/><rect x="3" y="4" width="1" height="1" fill="#000000"/><rect x="4" y="4" width="1" height="1" fill="#ffffff"/><rect x="5" y="4" width="1" height="1" fill="#ffffff"/><rect x="6" y="4" width="1" height="1" fill="#ffffff"/><rect x="7" y="4" width="1" height="1" fill="#ffffff"/><rect x="8" y="4" width="1" height="1" fill="#ffffff"/><rect x="9" y="4" width="1" height="1" fill="#ffffff"/><rect x="10" y="4" width="1" height="1" fill="#ffffff"/><rect x="11" y="4" width="1" height="1" fill="#ffffff"/><rect x="12" y="4" width="1" height="1" fill="#dfdfdf"/><rect x="13" y="4" width="1" height="1" fill="#ffffff"/><rect x="1" y="5" width="1" height="1" fill="#808080"/><rect x="2" y="5" width="1" height="1" fill="#808080"/><rect x="3" y="5" width="1" height="1" fill="#000000"/><rect x="4" y="5" width="1" height="1" fill="#ffffff"/><rect x="5" y="5" width="1" height="1" fill="#ffffff"/><rect x="6" y="5" width="1" height="1" fill="#ffffff"/><rect x="7" y="5" width="1" height="1" fill="#ffffff"/><rect x="8" y="5" width="1" height="1" fill="#ffffff"/><rect x="9" y="5" width="1" height="1" fill="#ffffff"/><rect x="10" y="5" width="1" height="1" fill="#ffffff"/><rect x="11" y="5" width="1" height="1" fill="#ffffff"/><rect x="12" y="5" width="1" height="1" fill="#dfdfdf"/><rect x="13" y="5" width="1" height="1" fill="#ffffff"/><rect x="14" y="5" width="1" height="1" fill="#ffffff"/><rect x="1" y="6" width="1" height="1" fill="#808080"/><rect x="2" y="6" width="1" height="1" fill="#000000"/><rect x="3" y="6" width="1" height="1" fill="#ffffff"/><rect x="4" y="6" width="1" height="1" fill="#ffffff"/><rect x="5" y="6" width="1" height="1" fill="#ffffff"/><rect x="6" y="6" width="1" height="1" fill="#ffffff"/><rect x="7" y="6" width="1" height="1" fill="#ffffff"/><rect x="8" y="6" width="1" height="1" fill="#ffffff"/><rect x="9" y="6" width="1" height="1" fill="#ffffff"/><rect x="10" y="6" width="1" height="1" fill="#ffffff"/><rect x="11" y="6" width="1" height="1" fill="#ffffff"/><rect x="12" y="6" width="1" height="1" fill="#ffffff"/><rect x="13" y="6" width="1" height="1" fill="#dfdfdf"/><rect x="14" y="6" width="1" height="1" fill="#ffffff"/><rect x="1" y="7" width="1" height="1" fill="#808080"/><rect x="2" y="7" width="1" height="1" fill="#000000"/><rect x="3" y="7" width="1" height="1" fill="#ffffff"/><rect x="4" y="7" width="1" height="1" fill="#ffffff"/><rect x="5" y="7" width="1" height="1" fill="#ffffff"/><rect x="6" y="7" width="1" height="1" fill="#ffffff"/><rect x="7" y="7" width="1" height="1" fill="#ffffff"/><rect x="8" y="7" width="1" height="1" fill="#ffffff"/><rect x="9" y="7" width="1" height="1" fill="#ffffff"/><rect x="10" y="7" width="1" height="1" fill="#ffffff"/><rect x="11" y="7" width="1" height="1" fill="#ffffff"/><rect x="12" y="7" width="1" height="1" fill="#ffffff"/><rect x="13" y="7" width="1" height="1" fill="#dfdfdf"/><rect x="14" y="7" width="1" height="1" fill="#ffffff"/><rect x="1" y="8" width="1" height="1" fill="#808080"/><rect x="2" y="8" width="1" height="1" fill="#000000"/><rect x="3" y="8" width="1" height="1" fill="#ffffff"/><rect x="4" y="8" width="1" height="1" fill="#ffffff"/><rect x="5" y="8" width="1" height="1" fill="#ffffff"/><rect x="6" y="8" width="1" height="1" fill="#ffffff"/><rect x="7" y="8" width="1" height="1" fill="#ffffff"/><rect x="8" y="8" width="1" height="1" fill="#ffffff"/><rect x="9" y="8" width="1" height="1" fill="#ffffff"/><rect x="10" y="8" width="1" height="1" fill="#ffffff"/><rect x="11" y="8" width="1" height="1" fill="#ffffff"/><rect x="12" y="8" width="1" height="1" fill="#ffffff"/><rect x="13" y="8" width="1" height="1" fill="#dfdfdf"/><rect x="14" y="8" width="1" height="1" fill="#ffffff"/><rect x="1" y="9" width="1" height="1" fill="#808080"/><rect x="2" y="9" width="1" height="1" fill="#000000"/><rect x="3" y="9" width="1" height="1" fill="#ffffff"/><rect x="4" y="9" width="1" height="1" fill="#ffffff"/><rect x="5" y="9" width="1" height="1" fill="#ffffff"/><rect x="6" y="9" width="1" height="1" fill="#ffffff"/><rect x="7" y="9" width="1" height="1" fill="#ffffff"/><rect x="8" y="9" width="1" height="1" fill="#ffffff"/><rect x="9" y="9" width="1" height="1" fill="#ffffff"/><rect x="10" y="9" width="1" height="1" fill="#ffffff"/><rect x="11" y="9" width="1" height="1" fill="#ffffff"/><rect x="12" y="9" width="1" height="1" fill="#ffffff"/><rect x="13" y="9" width="1" height="1" fill="#dfdfdf"/><rect x="14" y="9" width="1" height="1" fill="#ffffff"/><rect x="1" y="10" width="1" height="1" fill="#808080"/><rect x="2" y="10" width="1" height="1" fill="#808080"/><rect x="3" y="10" width="1" height="1" fill="#000000"/><rect x="4" y="10" width="1" height="1" fill="#ffffff"/><rect x="5" y="10" width="1" height="1" fill="#ffffff"/><rect x="6" y="10" width="1" height="1" fill="#ffffff"/><rect x="7" y="10" width="1" height="1" fill="#ffffff"/><rect x="8" y="10" width="1" height="1" fill="#ffffff"/><rect x="9" y="10" width="1" height="1" fill="#ffffff"/><rect x="10" y="10" width="1" height="1" fill="#ffffff"/><rect x="11" y="10" width="1" height="1" fill="#ffffff"/><rect x="12" y="10" width="1" height="1" fill="#dfdfdf"/><rect x="13" y="10" width="1" height="1" fill="#ffffff"/><rect x="14" y="10" width="1" height="1" fill="#ffffff"/><rect x="2" y="11" width="1" height="1" fill="#808080"/><rect x="3" y="11" width="1" height="1" fill="#000000"/><rect x="4" y="11" width="1" height="1" fill="#ffffff"/><rect x="5" y="11" width="1" height="1" fill="#ffffff"/><rect x="6" y="11" width="1" height="1" fill="#ffffff"/><rect x="7" y="11" width="1" height="1" fill="#ffffff"/><rect x="8" y="11" width="1" height="1" fill="#ffffff"/><rect x="9" y="11" width="1" height="1" fill="#ffffff"/><rect x="10" y="11" width="1" height="1" fill="#ffffff"/><rect x="11" y="11" width="1" height="1" fill="#ffffff"/><rect x="12" y="11" width="1" height="1" fill="#dfdfdf"/><rect x="13" y="11" width="1" height="1" fill="#ffffff"/><rect x="2" y="12" width="1" height="1" fill="#808080"/><rect x="3" y="12" width="1" height="1" fill="#ffffff"/><rect x="4" y="12" width="1" height="1" fill="#dfdfdf"/><rect x="5" y="12" width="1" height="1" fill="#dfdfdf"/><rect x="6" y="12" width="1" height="1" fill="#ffffff"/><rect x="7" y="12" width="1" height="1" fill="#ffffff"/><rect x="8" y="12" width="1" height="1" fill="#ffffff"/><rect x="9" y="12" width="1" height="1" fill="#ffffff"/><rect x="10" y="12" width="1" height="1" fill="#dfdfdf"/><rect x="11" y="12" width="1" height="1" fill="#dfdfdf"/><rect x="12" y="12" width="1" height="1" fill="#ffffff"/><rect x="13" y="12" width="1" height="1" fill="#ffffff"/><rect x="3" y="13" width="1" height="1" fill="#ffffff"/><rect x="4" y="13" width="1" height="1" fill="#ffffff"/><rect x="5" y="13" width="1" height="1" fill="#ffffff"/><rect x="6" y="13" width="1" height="1" fill="#dfdfdf"/><rect x="7" y="13" width="1" height="1" fill="#dfdfdf"/><rect x="8" y="13" width="1" height="1" fill="#dfdfdf"/><rect x="9" y="13" width="1" height="1" fill="#dfdfdf"/><rect x="10" y="13" width="1" height="1" fill="#ffffff"/><rect x="11" y="13" width="1" height="1" fill="#ffffff"/><rect x="12" y="13" width="1" height="1" fill="#ffffff"/><rect x="5" y="14" width="1" height="1" fill="#ffffff"/><rect x="6" y="14" width="1" height="1" fill="#ffffff"/><rect x="7" y="14" width="1" height="1" fill="#ffffff"/><rect x="8" y="14" width="1" height="1" fill="#ffffff"/><rect x="9" y="14" width="1" height="1" fill="#ffffff"/><rect x="10" y="14" width="1" height="1" fill="#ffffff"/></svg><svg style="position:absolute;left:492px;top:128px" width="16" height="16" shape-rendering="crispEdges"><rect x="5" y="1" width="1" height="1" fill="#808080"/><rect x="6" y="1" width="1" height="1" fill="#808080"/><rect x="7" y="1" width="1" height="1" fill="#808080"/><rect x="8" y="1" width="1" height="1" fill="#808080"/><rect x="9" y="1" width="1" height="1" fill="#808080"/><rect x="10" y="1" width="1" height="1" fill="#808080"/><rect x="3" y="2" width="1" height="1" fill="#808080"/><rect x="4" y="2" width="1" height="1" fill="#808080"/><rect x="5" y="2" width="1" height="1" fill="#808080"/><rect x="6" y="2" width="1" height="1" fill="#000000"/><rect x="7" y="2" width="1" height="1" fill="#000000"/><rect x="8" y="2" width="1" height="1" fill="#000000"/><rect x="9" y="2" width="1" height="1" fill="#000000"/><rect x="10" y="2" width="1" height="1" fill="#808080"/><rect x="11" y="2" width="1" height="1" fill="#808080"/><rect x="12" y="2" width="1" height="1" fill="#808080"/><rect x="2" y="3" width="1" height="1" fill="#808080"/><rect x="3" y="3" width="1" height="1" fill="#808080"/><rect x="4" y="3" width="1" height="1" fill="#000000"/><rect x="5" y="3" width="1" height="1" fill="#000000"/><rect x="6" y="3" width="1" height="1" fill="#ffffff"/><rect x="7" y="3" width="1" height="1" fill="#ffffff"/><rect x="8" y="3" width="1" height="1" fill="#ffffff"/><rect x="9" y="3" width="1" height="1" fill="#ffffff"/><rect x="10" y="3" width="1" height="1" fill="#000000"/><rect x="11" y="3" width="1" height="1" fill="#000000"/><rect x="12" y="3" width="1" height="1" fill="#ffffff"/><rect x="13" y="3" width="1" height="1" fill="#ffffff"/><rect x="2" y="4" width="1" height="1" fill="#808080"/><rect x="3" y="4" width="1" height="1" fill="#000000"/><rect x="4" y="4" width="1" height="1" fill="#ffffff"/><rect x="5" y="4" width="1" height="1" fill="#ffffff"/><rect x="6" y="4" width="1" height="1" fill="#ffffff"/><rect x="7" y="4" width="1" height="1" fill="#ffffff"/><rect x="8" y="4" width="1" height="1" fill="#ffffff"/><rect x="9" y="4" width="1" height="1" fill="#ffffff"/><rect x="10" y="4" width="1" height="1" fill="#ffffff"/><rect x="11" y="4" width="1" height="1" fill="#ffffff"/><rect x="12" y="4" width="1" height="1" fill="#dfdfdf"/><rect x="13" y="4" width="1" height="1" fill="#ffffff"/><rect x="1" y="5" width="1" height="1" fill="#808080"/><rect x="2" y="5" width="1" height="1" fill="#808080"/><rect x="3" y="5" width="1" height="1" fill="#000000"/><rect x="4" y="5" width="1" height="1" fill="#ffffff"/><rect x="5" y="5" width="1" height="1" fill="#ffffff"/><rect x="6" y="5" width="1" height="1" fill="#000000"/><rect x="7" y="5" width="1" height="1" fill="#000000"/><rect x="8" y="5" width="1" height="1" fill="#000000"/><rect x="9" y="5" width="1" height="1" fill="#000000"/><rect x="10" y="5" width="1" height="1" fill="#ffffff"/><rect x="11" y="5" width="1" height="1" fill="#ffffff"/><rect x="12" y="5" width="1" height="1" fill="#dfdfdf"/><rect x="13" y="5" width="1" height="1" fill="#ffffff"/><rect x="14" y="5" width="1" height="1" fill="#ffffff"/><rect x="1" y="6" width="1" height="1" fill="#808080"/><rect x="2" y="6" width="1" height="1" fill="#000000"/><rect x="3" y="6" width="1" height="1" fill="#ffffff"/><rect x="4" y="6" width="1" height="1" fill="#ffffff"/><rect x="5" y="6" width="1" height="1" fill="#000000"/><rect x="6" y="6" width="1" height="1" fill="#000000"/><rect x="7" y="6" width="1" height="1" fill="#000000"/><rect x="8" y="6" width="1" height="1" fill="#000000"/><rect x="9" y="6" width="1" height="1" fill="#000000"/><rect x="10" y="6" width="1" height="1" fill="#000000"/><rect x="11" y="6" width="1" height="1" fill="#ffffff"/><rect x="12" y="6" width="1" height="1" fill="#ffffff"/><rect x="13" y="6" width="1" height="1" fill="#dfdfdf"/><rect x="14" y="6" width="1" height="1" fill="#ffffff"/><rect x="1" y="7" width="1" height="1" fill="#808080"/><rect x="2" y="7" width="1" height="1" fill="#000000"/><rect x="3" y="7" width="1" height="1" fill="#ffffff"/><rect x="4" y="7" width="1" height="1" fill="#ffffff"/><rect x="5" y="7" width="1" height="1" fill="#000000"/><rect x="6" y="7" width="1" height="1" fill="#000000"/><rect x="7" y="7" width="1" height="1" fill="#000000"/><rect x="8" y="7" width="1" height="1" fill="#000000"/><rect x="9" y="7" width="1" height="1" fill="#000000"/><rect x="10" y="7" width="1" height="1" fill="#000000"/><rect x="11" y="7" width="1" height="1" fill="#ffffff"/><rect x="12" y="7" width="1" height="1" fill="#ffffff"/><rect x="13" y="7" width="1" height="1" fill="#dfdfdf"/><rect x="14" y="7" width="1" height="1" fill="#ffffff"/><rect x="1" y="8" width="1" height="1" fill="#808080"/><rect x="2" y="8" width="1" height="1" fill="#000000"/><rect x="3" y="8" width="1" height="1" fill="#ffffff"/><rect x="4" y="8" width="1" height="1" fill="#ffffff"/><rect x="5" y="8" width="1" height="1" fill="#000000"/><rect x="6" y="8" width="1" height="1" fill="#000000"/><rect x="7" y="8" width="1" height="1" fill="#000000"/><rect x="8" y="8" width="1" height="1" fill="#000000"/><rect x="9" y="8" width="1" height="1" fill="#000000"/><rect x="10" y="8" width="1" height="1" fill="#000000"/><rect x="11" y="8" width="1" height="1" fill="#ffffff"/><rect x="12" y="8" width="1" height="1" fill="#ffffff"/><rect x="13" y="8" width="1" height="1" fill="#dfdfdf"/><rect x="14" y="8" width="1" height="1" fill="#ffffff"/><rect x="1" y="9" width="1" height="1" fill="#808080"/><rect x="2" y="9" width="1" height="1" fill="#000000"/><rect x="3" y="9" width="1" height="1" fill="#ffffff"/><rect x="4" y="9" width="1" height="1" fill="#ffffff"/><rect x="5" y="9" width="1" height="1" fill="#000000"/><rect x="6" y="9" width="1" height="1" fill="#000000"/><rect x="7" y="9" width="1" height="1" fill="#000000"/><rect x="8" y="9" width="1" height="1" fill="#000000"/><rect x="9" y="9" width="1" height="1" fill="#000000"/><rect x="10" y="9" width="1" height="1" fill="#000000"/><rect x="11" y="9" width="1" height="1" fill="#ffffff"/><rect x="12" y="9" width="1" height="1" fill="#ffffff"/><rect x="13" y="9" width="1" height="1" fill="#dfdfdf"/><rect x="14" y="9" width="1" height="1" fill="#ffffff"/><rect x="1" y="10" width="1" height="1" fill="#808080"/><rect x="2" y="10" width="1" height="1" fill="#808080"/><rect x="3" y="10" width="1" height="1" fill="#000000"/><rect x="4" y="10" width="1" height="1" fill="#ffffff"/><rect x="5" y="10" width="1" height="1" fill="#ffffff"/><rect x="6" y="10" width="1" height="1" fill="#000000"/><rect x="7" y="10" width="1" height="1" fill="#000000"/><rect x="8" y="10" width="1" height="1" fill="#000000"/><rect x="9" y="10" width="1" height="1" fill="#000000"/><rect x="10" y="10" width="1" height="1" fill="#ffffff"/><rect x="11" y="10" width="1" height="1" fill="#ffffff"/><rect x="12" y="10" width="1" height="1" fill="#dfdfdf"/><rect x="13" y="10" width="1" height="1" fill="#ffffff"/><rect x="14" y="10" width="1" height="1" fill="#ffffff"/><rect x="2" y="11" width="1" height="1" fill="#808080"/><rect x="3" y="11" width="1" height="1" fill="#000000"/><rect x="4" y="11" width="1" height="1" fill="#ffffff"/><rect x="5" y="11" width="1" height="1" fill="#ffffff"/><rect x="6" y="11" width="1" height="1" fill="#ffffff"/><rect x="7" y="11" width="1" height="1" fill="#ffffff"/><rect x="8" y="11" width="1" height="1" fill="#ffffff"/><rect x="9" y="11" width="1" height="1" fill="#ffffff"/><rect x="10" y="11" width="1" height="1" fill="#ffffff"/><rect x="11" y="11" width="1" height="1" fill="#ffffff"/><rect x="12" y="11" width="1" height="1" fill="#dfdfdf"/><rect x="13" y="11" width="1" height="1" fill="#ffffff"/><rect x="2" y="12" width="1" height="1" fill="#808080"/><rect x="3" y="12" width="1" height="1" fill="#ffffff"/><rect x="4" y="12" width="1" height="1" fill="#dfdfdf"/><rect x="5" y="12" width="1" height="1" fill="#dfdfdf"/><rect x="6" y="12" width="1" height="1" fill="#ffffff"/><rect x="7" y="12" width="1" height="1" fill="#ffffff"/><rect x="8" y="12" width="1" height="1" fill="#ffffff"/><rect x="9" y="12" width="1" height="1" fill="#ffffff"/><rect x="10" y="12" width="1" height="1" fill="#dfdfdf"/><rect x="11" y="12" width="1" height="1" fill="#dfdfdf"/><rect x="12" y="12" width="1" height="1" fill="#ffffff"/><rect x="13" y="12" width="1" height="1" fill="#ffffff"/><rect x="3" y="13" width="1" height="1" fill="#ffffff"/><rect x="4" y="13" width="1" height="1" fill="#ffffff"/><rect x="5" y="13" width="1" height="1" fill="#ffffff"/><rect x="6" y="13" width="1" height="1" fill="#dfdfdf"/><rect x="7" y="13" width="1" height="1" fill="#dfdfdf"/><rect x="8" y="13" width="1" height="1" fill="#dfdfdf"/><rect x="9" y="13" width="1" height="1" fill="#dfdfdf"/><rect x="10" y="13" width="1" height="1" fill="#ffffff"/><rect x="11" y="13" width="1" height="1" fill="#ffffff"/><rect x="12" y="13" width="1" height="1" fill="#ffffff"/><rect x="5" y="14" width="1" height="1" fill="#ffffff"/><rect x="6" y="14" width="1" height="1" fill="#ffffff"/><rect x="7" y="14" width="1" height="1" fill="#ffffff"/><rect x="8" y="14" width="1" height="1" fill="#ffffff"/><rect x="9" y="14" width="1" height="1" fill="#ffffff"/><rect x="10" y="14" width="1" height="1" fill="#ffffff"/></svg><svg style="position:absolute;left:540px;top:128px" width="16" height="16" shape-rendering="crispEdges"><rect x="5" y="1" width="1" height="1" fill="#808080"/><rect x="6" y="1" width="1" height="1" fill="#808080"/><rect x="7" y="1" width="1" height="1" fill="#808080"/><rect x="8" y="1" width="1" height="1" fill="#808080"/><rect x="9" y="1" width="1" height="1" fill="#808080"/><rect x="10" y="1" width="1" height="1" fill="#808080"/><rect x="3" y="2" width="1" height="1" fill="#808080"/><rect x="4" y="2" width="1" height="1" fill="#808080"/><rect x="5" y="2" width="1" height="1" fill="#808080"/><rect x="6" y="2" width="1" height="1" fill="#000000"/><rect x="7" y="2" width="1" height="1" fill="#000000"/><rect x="8" y="2" width="1" height="1" fill="#000000"/><rect x="9" y="2" width="1" height="1" fill="#000000"/><rect x="10" y="2" width="1" height="1" fill="#808080"/><rect x="11" y="2" width="1" height="1" fill="#808080"/><rect x="12" y="2" width="1" height="1" fill="#808080"/><rect x="2" y="3" width="1" height="1" fill="#808080"/><rect x="3" y="3" width="1" height="1" fill="#808080"/><rect x="4" y="3" width="1" height="1" fill="#000000"/><rect x="5" y="3" width="1" height="1" fill="#000000"/><rect x="6" y="3" width="1" height="1" fill="#ffffff"/><rect x="7" y="3" width="1" height="1" fill="#ffffff"/><rect x="8" y="3" width="1" height="1" fill="#ffffff"/><rect x="9" y="3" width="1" height="1" fill="#ffffff"/><rect x="10" y="3" width="1" height="1" fill="#000000"/><rect x="11" y="3" width="1" height="1" fill="#000000"/><rect x="12" y="3" width="1" height="1" fill="#ffffff"/><rect x="13" y="3" width="1" height="1" fill="#ffffff"/><rect x="2" y="4" width="1" height="1" fill="#808080"/><rect x="3" y="4" width="1" height="1" fill="#000000"/><rect x="4" y="4" width="1" height="1" fill="#ffffff"/><rect x="5" y="4" width="1" height="1" fill="#ffffff"/><rect x="6" y="4" width="1" height="1" fill="#ffffff"/><rect x="7" y="4" width="1" height="1" fill="#ffffff"/><rect x="8" y="4" width="1" height="1" fill="#ffffff"/><rect x="9" y="4" width="1" height="1" fill="#ffffff"/><rect x="10" y="4" width="1" height="1" fill="#ffffff"/><rect x="11" y="4" width="1" height="1" fill="#ffffff"/><rect x="12" y="4" width="1" height="1" fill="#dfdfdf"/><rect x="13" y="4" width="1" height="1" fill="#ffffff"/><rect x="1" y="5" width="1" height="1" fill="#808080"/><rect x="2" y="5" width="1" height="1" fill="#808080"/><rect x="3" y="5" width="1" height="1" fill="#000000"/><rect x="4" y="5" width="1" height="1" fill="#ffffff"/><rect x="5" y="5" width="1" height="1" fill="#ffffff"/><rect x="6" y="5" width="1" height="1" fill="#ffffff"/><rect x="7" y="5" width="1" height="1" fill="#ffffff"/><rect x="8" y="5" width="1" height="1" fill="#ffffff"/><rect x="9" y="5" width="1" height="1" fill="#ffffff"/><rect x="10" y="5" width="1" height="1" fill="#ffffff"/><rect x="11" y="5" width="1" height="1" fill="#ffffff"/><rect x="12" y="5" width="1" height="1" fill="#dfdfdf"/><rect x="13" y="5" width="1" height="1" fill="#ffffff"/><rect x="14" y="5" width="1" height="1" fill="#ffffff"/><rect x="1" y="6" width="1" height="1" fill="#808080"/><rect x="2" y="6" width="1" height="1" fill="#000000"/><rect x="3" y="6" width="1" height="1" fill="#ffffff"/><rect x="4" y="6" width="1" height="1" fill="#ffffff"/><rect x="5" y="6" width="1" height="1" fill="#ffffff"/><rect x="6" y="6" width="1" height="1" fill="#ffffff"/><rect x="7" y="6" width="1" height="1" fill="#ffffff"/><rect x="8" y="6" width="1" height="1" fill="#ffffff"/><rect x="9" y="6" width="1" height="1" fill="#ffffff"/><rect x="10" y="6" width="1" height="1" fill="#ffffff"/><rect x="11" y="6" width="1" height="1" fill="#ffffff"/><rect x="12" y="6" width="1" height="1" fill="#ffffff"/><rect x="13" y="6" width="1" height="1" fill="#dfdfdf"/><rect x="14" y="6" width="1" height="1" fill="#ffffff"/><rect x="1" y="7" width="1" height="1" fill="#808080"/><rect x="2" y="7" width="1" height="1" fill="#000000"/><rect x="3" y="7" width="1" height="1" fill="#ffffff"/><rect x="4" y="7" width="1" height="1" fill="#ffffff"/><rect x="5" y="7" width="1" height="1" fill="#ffffff"/><rect x="6" y="7" width="1" height="1" fill="#ffffff"/><rect x="7" y="7" width="1" height="1" fill="#ffffff"/><rect x="8" y="7" width="1" height="1" fill="#ffffff"/><rect x="9" y="7" width="1" height="1" fill="#ffffff"/><rect x="10" y="7" width="1" height="1" fill="#ffffff"/><rect x="11" y="7" width="1" height="1" fill="#ffffff"/><rect x="12" y="7" width="1" height="1" fill="#ffffff"/><rect x="13" y="7" width="1" height="1" fill="#dfdfdf"/><rect x="14" y="7" width="1" height="1" fill="#ffffff"/><rect x="1" y="8" width="1" height="1" fill="#808080"/><rect x="2" y="8" width="1" height="1" fill="#000000"/><rect x="3" y="8" width="1" height="1" fill="#ffffff"/><rect x="4" y="8" width="1" height="1" fill="#ffffff"/><rect x="5" y="8" width="1" height="1" fill="#ffffff"/><rect x="6" y="8" width="1" height="1" fill="#ffffff"/><rect x="7" y="8" width="1" height="1" fill="#ffffff"/><rect x="8" y="8" width="1" height="1" fill="#ffffff"/><rect x="9" y="8" width="1" height="1" fill="#ffffff"/><rect x="10" y="8" width="1" height="1" fill="#ffffff"/><rect x="11" y="8" width="1" height="1" fill="#ffffff"/><rect x="12" y="8" width="1" height="1" fill="#ffffff"/><rect x="13" y="8" width="1" height="1" fill="#dfdfdf"/><rect x="14" y="8" width="1" height="1" fill="#ffffff"/><rect x="1" y="9" width="1" height="1" fill="#808080"/><rect x="2" y="9" width="1" height="1" fill="#000000"/><rect x="3" y="9" width="1" height="1" fill="#ffffff"/><rect x="4" y="9" width="1" height="1" fill="#ffffff"/><rect x="5" y="9" width="1" height="1" fill="#ffffff"/><rect x="6" y="9" width="1" height="1" fill="#ffffff"/><rect x="7" y="9" width="1" height="1" fill="#ffffff"/><rect x="8" y="9" width="1" height="1" fill="#ffffff"/><rect x="9" y="9" width="1" height="1" fill="#ffffff"/><rect x="10" y="9" width="1" height="1" fill="#ffffff"/><rect x="11" y="9" width="1" height="1" fill="#ffffff"/><rect x="12" y="9" width="1" height="1" fill="#ffffff"/><rect x="13" y="9" width="1" height="1" fill="#dfdfdf"/><rect x="14" y="9" width="1" height="1" fill="#ffffff"/><rect x="1" y="10" width="1" height="1" fill="#808080"/><rect x="2" y="10" width="1" height="1" fill="#808080"/><rect x="3" y="10" width="1" height="1" fill="#000000"/><rect x="4" y="10" width="1" height="1" fill="#ffffff"/><rect x="5" y="10" width="1" height="1" fill="#ffffff"/><rect x="6" y="10" width="1" height="1" fill="#ffffff"/><rect x="7" y="10" width="1" height="1" fill="#ffffff"/><rect x="8" y="10" width="1" height="1" fill="#ffffff"/><rect x="9" y="10" width="1" height="1" fill="#ffffff"/><rect x="10" y="10" width="1" height="1" fill="#ffffff"/><rect x="11" y="10" width="1" height="1" fill="#ffffff"/><rect x="12" y="10" width="1" height="1" fill="#dfdfdf"/><rect x="13" y="10" width="1" height="1" fill="#ffffff"/><rect x="14" y="10" width="1" height="1" fill="#ffffff"/><rect x="2" y="11" width="1" height="1" fill="#808080"/><rect x="3" y="11" width="1" height="1" fill="#000000"/><rect x="4" y="11" width="1" height="1" fill="#ffffff"/><rect x="5" y="11" width="1" height="1" fill="#ffffff"/><rect x="6" y="11" width="1" height="1" fill="#ffffff"/><rect x="7" y="11" width="1" height="1" fill="#ffffff"/><rect x="8" y="11" width="1" height="1" fill="#ffffff"/><rect x="9" y="11" width="1" height="1" fill="#ffffff"/><rect x="10" y="11" width="1" height="1" fill="#ffffff"/><rect x="11" y="11" width="1" height="1" fill="#ffffff"/><rect x="12" y="11" width="1" height="1" fill="#dfdfdf"/><rect x="13" y="11" width="1" height="1" fill="#ffffff"/><rect x="2" y="12" width="1" height="1" fill="#808080"/><rect x="3" y="12" width="1" height="1" fill="#ffffff"/><rect x="4" y="12" width="1" height="1" fill="#dfdfdf"/><rect x="5" y="12" width="1" height="1" fill="#dfdfdf"/><rect x="6" y="12" width="1" height="1" fill="#ffffff"/><rect x="7" y="12" width="1" height="1" fill="#ffffff"/><rect x="8" y="12" width="1" height="1" fill="#ffffff"/><rect x="9" y="12" width="1" height="1" fill="#ffffff"/><rect x="10" y="12" width="1" height="1" fill="#dfdfdf"/><rect x="11" y="12" width="1" height="1" fill="#dfdfdf"/><rect x="12" y="12" width="1" height="1" fill="#ffffff"/><rect x="13" y="12" width="1" height="1" fill="#ffffff"/><rect x="3" y="13" width="1" height="1" fill="#ffffff"/><rect x="4" y="13" width="1" height="1" fill="#ffffff"/><rect x="5" y="13" width="1" height="1" fill="#ffffff"/><rect x="6" y="13" width="1" height="1" fill="#dfdfdf"/><rect x="7" y="13" width="1" height="1" fill="#dfdfdf"/><rect x="8" y="13" width="1" height="1" fill="#dfdfdf"/><rect x="9" y="13" width="1" height="1" fill="#dfdfdf"/><rect x="10" y="13" width="1" height="1" fill="#ffffff"/><rect x="11" y="13" width="1" height="1" fill="#ffffff"/><rect x="12" y="13" width="1" height="1" fill="#ffffff"/><rect x="5" y="14" width="1" height="1" fill="#ffffff"/><rect x="6" y="14" width="1" height="1" fill="#ffffff"/><rect x="7" y="14" width="1" height="1" fill="#ffffff"/><rect x="8" y="14" width="1" height="1" fill="#ffffff"/><rect x="9" y="14" width="1" height="1" fill="#ffffff"/><rect x="10" y="14" width="1" height="1" fill="#ffffff"/></svg><i style="left:629px;top:100px;width:261px;height:1px;background:#ffffff;"></i><i style="left:629px;top:231px;width:261px;height:1px;background:#ffffff;"></i><i style="left:629px;top:100px;width:1px;height:132px;background:#ffffff;"></i><i style="left:889px;top:100px;width:1px;height:132px;background:#ffffff;"></i><i style="left:628px;top:99px;width:261px;height:1px;background:#808080;"></i><i style="left:628px;top:230px;width:261px;height:1px;background:#808080;"></i><i style="left:628px;top:99px;width:1px;height:132px;background:#808080;"></i><i style="left:888px;top:99px;width:1px;height:132px;background:#808080;"></i><i style="left:725px;top:99px;width:68px;height:2px;background:#c0c0c0;"></i><b class="t" style="left:727px;top:93px;color:#007000;font-size:13.5px;line-height:14px;text-rendering:geometricPrecision;">White point</b><i style="left:644px;top:132px;width:168px;height:1px;background:#808080;"></i><i style="left:644px;top:133px;width:168px;height:1px;background:#000000;"></i><i style="left:644px;top:134px;width:168px;height:1px;background:#dfdfdf;"></i><i style="left:644px;top:135px;width:168px;height:1px;background:#ffffff;"></i><i style="left:811px;top:132px;width:1px;height:4px;background:#ffffff;"></i><i style="left:651px;top:113px;width:1px;height:4px;background:#000000;"></i><i style="left:666px;top:114px;width:1px;height:3px;background:#000000;"></i><i style="left:681px;top:114px;width:1px;height:3px;background:#000000;"></i><i style="left:696px;top:114px;width:1px;height:3px;background:#000000;"></i><i style="left:712px;top:114px;width:1px;height:3px;background:#000000;"></i><i style="left:727px;top:114px;width:1px;height:3px;background:#000000;"></i><i style="left:742px;top:114px;width:1px;height:3px;background:#000000;"></i><i style="left:757px;top:114px;width:1px;height:3px;background:#000000;"></i><i style="left:772px;top:114px;width:1px;height:3px;background:#000000;"></i><i style="left:787px;top:114px;width:1px;height:3px;background:#000000;"></i><i style="left:802px;top:114px;width:1px;height:3px;background:#000000;"></i><i style="left:804px;top:113px;width:1px;height:4px;background:#000000;"></i><i style="left:795px;top:125px;width:15px;height:13px;background:#c0c0c0;"></i><i style="left:802px;top:118px;width:1px;height:1px;background:#c0c0c0;"></i><i style="left:801px;top:119px;width:3px;height:1px;background:#c0c0c0;"></i><i style="left:800px;top:120px;width:5px;height:1px;background:#c0c0c0;"></i><i style="left:799px;top:121px;width:7px;height:1px;background:#c0c0c0;"></i><i style="left:798px;top:122px;width:9px;height:1px;background:#c0c0c0;"></i><i style="left:797px;top:123px;width:11px;height:1px;background:#c0c0c0;"></i><i style="left:796px;top:124px;width:13px;height:1px;background:#c0c0c0;"></i><i style="left:802px;top:118px;width:1px;height:1px;background:#ffffff;"></i><i style="left:802px;top:118px;width:1px;height:1px;background:#000000;"></i><i style="left:801px;top:119px;width:1px;height:1px;background:#ffffff;"></i><i style="left:803px;top:119px;width:1px;height:1px;background:#000000;"></i><i style="left:802px;top:119px;width:1px;height:1px;background:#808080;"></i><i style="left:800px;top:120px;width:1px;height:1px;background:#ffffff;"></i><i style="left:804px;top:120px;width:1px;height:1px;background:#000000;"></i><i style="left:803px;top:120px;width:1px;height:1px;background:#808080;"></i><i style="left:799px;top:121px;width:1px;height:1px;background:#ffffff;"></i><i style="left:805px;top:121px;width:1px;height:1px;background:#000000;"></i><i style="left:804px;top:121px;width:1px;height:1px;background:#808080;"></i><i style="left:798px;top:122px;width:1px;height:1px;background:#ffffff;"></i><i style="left:806px;top:122px;width:1px;height:1px;background:#000000;"></i><i style="left:805px;top:122px;width:1px;height:1px;background:#808080;"></i><i style="left:797px;top:123px;width:1px;height:1px;background:#ffffff;"></i><i style="left:807px;top:123px;width:1px;height:1px;background:#000000;"></i><i style="left:806px;top:123px;width:1px;height:1px;background:#808080;"></i><i style="left:796px;top:124px;width:1px;height:1px;background:#ffffff;"></i><i style="left:808px;top:124px;width:1px;height:1px;background:#000000;"></i><i style="left:807px;top:124px;width:1px;height:1px;background:#808080;"></i><i style="left:795px;top:125px;width:1px;height:1px;background:#ffffff;"></i><i style="left:809px;top:125px;width:1px;height:1px;background:#000000;"></i><i style="left:808px;top:125px;width:1px;height:1px;background:#808080;"></i><i style="left:795px;top:125px;width:1px;height:13px;background:#ffffff;"></i><i style="left:809px;top:125px;width:1px;height:13px;background:#000000;"></i><i style="left:808px;top:126px;width:1px;height:12px;background:#808080;"></i><i style="left:824px;top:118px;width:56px;height:24px;background:#ffffff;"></i><i style="left:824px;top:118px;width:56px;height:1px;background:#808080;"></i><i style="left:824px;top:118px;width:1px;height:24px;background:#808080;"></i><i style="left:825px;top:119px;width:54px;height:1px;background:#000000;"></i><i style="left:825px;top:119px;width:1px;height:22px;background:#000000;"></i><i style="left:824px;top:141px;width:56px;height:1px;background:#ffffff;"></i><i style="left:879px;top:118px;width:1px;height:24px;background:#ffffff;"></i><i style="left:825px;top:140px;width:54px;height:1px;background:#dfdfdf;"></i><i style="left:878px;top:119px;width:1px;height:22px;background:#dfdfdf;"></i><b class="t" style="left:830px;top:122px;color:#c00000;font-size:13.5px;line-height:14px;letter-spacing:-0.25px;text-rendering:geometricPrecision;"><span style="letter-spacing:-0.75px">65535</span></b><i style="left:824px;top:171px;width:56px;height:1px;background:#000000;"></i><i style="left:879px;top:148px;width:1px;height:24px;background:#000000;"></i><i style="left:825px;top:149px;width:54px;height:1px;background:#ffffff;"></i><i style="left:825px;top:149px;width:1px;height:22px;background:#ffffff;"></i><i style="left:827px;top:151px;width:50px;height:1px;background:#000000;"></i><i style="left:827px;top:168px;width:50px;height:1px;background:#000000;"></i><i style="left:827px;top:151px;width:1px;height:18px;background:#000000;"></i><i style="left:876px;top:151px;width:1px;height:18px;background:#000000;"></i><i style="left:828px;top:152px;width:48px;height:1px;background:#ffffff;"></i><i style="left:828px;top:167px;width:48px;height:1px;background:#ffffff;"></i><i style="left:828px;top:152px;width:1px;height:16px;background:#ffffff;"></i><i style="left:875px;top:152px;width:1px;height:16px;background:#ffffff;"></i><b class="t" style="left:836px;top:153px;color:#000;font-size:13.5px;line-height:14px;letter-spacing:0.5px;text-rendering:geometricPrecision;">Reset</b><b class="t" style="left:639px;top:152px;color:#ffffff;font-size:13px;line-height:13px;-webkit-text-stroke:0;text-rendering:geometricPrecision;">R</b><b class="t" style="left:638px;top:151px;color:#808080;font-size:13px;line-height:13px;-webkit-text-stroke:0;text-rendering:geometricPrecision;">R</b><i style="left:656px;top:150px;width:16px;height:16px;background:#c0c0c0;"></i><i style="left:656px;top:150px;width:16px;height:1px;background:#808080;"></i><i style="left:656px;top:150px;width:1px;height:16px;background:#808080;"></i><i style="left:657px;top:151px;width:14px;height:1px;background:#000000;"></i><i style="left:657px;top:151px;width:1px;height:14px;background:#000000;"></i><i style="left:656px;top:165px;width:16px;height:1px;background:#ffffff;"></i><i style="left:671px;top:150px;width:1px;height:16px;background:#ffffff;"></i><i style="left:657px;top:164px;width:14px;height:1px;background:#dfdfdf;"></i><i style="left:670px;top:151px;width:1px;height:14px;background:#dfdfdf;"></i><svg style="position:absolute;left:656px;top:150px" width="16" height="16"><polyline points="4.5,6 6.5,9 11,4.5" fill="none" stroke="#808080" stroke-width="2.2"/></svg><b class="t" style="left:679px;top:152px;color:#ffffff;font-size:13px;line-height:13px;-webkit-text-stroke:0;text-rendering:geometricPrecision;">G</b><b class="t" style="left:678px;top:151px;color:#808080;font-size:13px;line-height:13px;-webkit-text-stroke:0;text-rendering:geometricPrecision;">G</b><i style="left:696px;top:150px;width:16px;height:16px;background:#c0c0c0;"></i><i style="left:696px;top:150px;width:16px;height:1px;background:#808080;"></i><i style="left:696px;top:150px;width:1px;height:16px;background:#808080;"></i><i style="left:697px;top:151px;width:14px;height:1px;background:#000000;"></i><i style="left:697px;top:151px;width:1px;height:14px;background:#000000;"></i><i style="left:696px;top:165px;width:16px;height:1px;background:#ffffff;"></i><i style="left:711px;top:150px;width:1px;height:16px;background:#ffffff;"></i><i style="left:697px;top:164px;width:14px;height:1px;background:#dfdfdf;"></i><i style="left:710px;top:151px;width:1px;height:14px;background:#dfdfdf;"></i><svg style="position:absolute;left:696px;top:150px" width="16" height="16"><polyline points="4.5,6 6.5,9 11,4.5" fill="none" stroke="#808080" stroke-width="2.2"/></svg><b class="t" style="left:719px;top:152px;color:#ffffff;font-size:13px;line-height:13px;-webkit-text-stroke:0;text-rendering:geometricPrecision;">B</b><b class="t" style="left:718px;top:151px;color:#808080;font-size:13px;line-height:13px;-webkit-text-stroke:0;text-rendering:geometricPrecision;">B</b><i style="left:736px;top:150px;width:16px;height:16px;background:#c0c0c0;"></i><i style="left:736px;top:150px;width:16px;height:1px;background:#808080;"></i><i style="left:736px;top:150px;width:1px;height:16px;background:#808080;"></i><i style="left:737px;top:151px;width:14px;height:1px;background:#000000;"></i><i style="left:737px;top:151px;width:1px;height:14px;background:#000000;"></i><i style="left:736px;top:165px;width:16px;height:1px;background:#ffffff;"></i><i style="left:751px;top:150px;width:1px;height:16px;background:#ffffff;"></i><i style="left:737px;top:164px;width:14px;height:1px;background:#dfdfdf;"></i><i style="left:750px;top:151px;width:1px;height:14px;background:#dfdfdf;"></i><svg style="position:absolute;left:736px;top:150px" width="16" height="16"><polyline points="4.5,6 6.5,9 11,4.5" fill="none" stroke="#808080" stroke-width="2.2"/></svg><b class="t" style="left:631px;top:179px;color:#0000cc;font-size:13.5px;line-height:14px;letter-spacing:-0.343px;text-rendering:geometricPrecision;">R,G,B  #: <span style="letter-spacing:-0.843px">3967162</span>, <span style="letter-spacing:-0.843px">11419631</span>, <span style="letter-spacing:-0.843px">4066626</span></b><b class="t" style="left:631px;top:194px;color:#0000cc;font-size:13.5px;line-height:14px;letter-spacing:-0.306px;text-rendering:geometricPrecision;">R,G,B %: <span style="letter-spacing:-0.806px">49</span>.<span style="letter-spacing:-0.806px">8945</span>%, <span style="letter-spacing:-0.806px">71</span>.<span style="letter-spacing:-0.806px">8116</span>%, <span style="letter-spacing:-0.806px">51</span>.<span style="letter-spacing:-0.806px">1454</span>%</b><b class="t" style="left:373px;top:179px;color:#007000;font-size:13.5px;line-height:14px;letter-spacing:0.4px;text-rendering:geometricPrecision;">Mapped</b><i style="left:424px;top:178px;width:16px;height:16px;background:#ffffff;"></i><i style="left:424px;top:178px;width:16px;height:1px;background:#808080;"></i><i style="left:424px;top:178px;width:1px;height:16px;background:#808080;"></i><i style="left:425px;top:179px;width:14px;height:1px;background:#000000;"></i><i style="left:425px;top:179px;width:1px;height:14px;background:#000000;"></i><i style="left:424px;top:193px;width:16px;height:1px;background:#ffffff;"></i><i style="left:439px;top:178px;width:1px;height:16px;background:#ffffff;"></i><i style="left:425px;top:192px;width:14px;height:1px;background:#dfdfdf;"></i><i style="left:438px;top:179px;width:1px;height:14px;background:#dfdfdf;"></i><i style="left:474px;top:178px;width:16px;height:16px;background:#ffffff;"></i><i style="left:474px;top:178px;width:16px;height:1px;background:#808080;"></i><i style="left:474px;top:178px;width:1px;height:16px;background:#808080;"></i><i style="left:475px;top:179px;width:14px;height:1px;background:#000000;"></i><i style="left:475px;top:179px;width:1px;height:14px;background:#000000;"></i><i style="left:474px;top:193px;width:16px;height:1px;background:#ffffff;"></i><i style="left:489px;top:178px;width:1px;height:16px;background:#ffffff;"></i><i style="left:475px;top:192px;width:14px;height:1px;background:#dfdfdf;"></i><i style="left:488px;top:179px;width:1px;height:14px;background:#dfdfdf;"></i><b class="t" style="left:494px;top:179px;color:#007000;font-size:13.5px;line-height:14px;text-rendering:geometricPrecision;">Fine</b><b class="t" style="left:343px;top:214px;color:#000;font-size:13.5px;line-height:14px;letter-spacing:1.0px;text-rendering:geometricPrecision;">-<span style="letter-spacing:0.5px">1</span></b><i style="left:368px;top:226px;width:166px;height:1px;background:#808080;"></i><i style="left:368px;top:227px;width:166px;height:1px;background:#000000;"></i><i style="left:368px;top:228px;width:166px;height:1px;background:#dfdfdf;"></i><i style="left:368px;top:229px;width:166px;height:1px;background:#ffffff;"></i><i style="left:533px;top:226px;width:1px;height:4px;background:#ffffff;"></i><i style="left:375px;top:206px;width:1px;height:4px;background:#000000;"></i><i style="left:384px;top:207px;width:1px;height:3px;background:#000000;"></i><i style="left:394px;top:207px;width:1px;height:3px;background:#000000;"></i><i style="left:403px;top:207px;width:1px;height:3px;background:#000000;"></i><i style="left:413px;top:207px;width:1px;height:3px;background:#000000;"></i><i style="left:422px;top:207px;width:1px;height:3px;background:#000000;"></i><i style="left:432px;top:207px;width:1px;height:3px;background:#000000;"></i><i style="left:441px;top:207px;width:1px;height:3px;background:#000000;"></i><i style="left:451px;top:207px;width:1px;height:3px;background:#000000;"></i><i style="left:460px;top:207px;width:1px;height:3px;background:#000000;"></i><i style="left:469px;top:207px;width:1px;height:3px;background:#000000;"></i><i style="left:479px;top:207px;width:1px;height:3px;background:#000000;"></i><i style="left:488px;top:207px;width:1px;height:3px;background:#000000;"></i><i style="left:498px;top:207px;width:1px;height:3px;background:#000000;"></i><i style="left:507px;top:207px;width:1px;height:3px;background:#000000;"></i><i style="left:517px;top:207px;width:1px;height:3px;background:#000000;"></i><i style="left:526px;top:206px;width:1px;height:4px;background:#000000;"></i><i style="left:434px;top:219px;width:15px;height:13px;background:#c0c0c0;"></i><i style="left:441px;top:212px;width:1px;height:1px;background:#c0c0c0;"></i><i style="left:440px;top:213px;width:3px;height:1px;background:#c0c0c0;"></i><i style="left:439px;top:214px;width:5px;height:1px;background:#c0c0c0;"></i><i style="left:438px;top:215px;width:7px;height:1px;background:#c0c0c0;"></i><i style="left:437px;top:216px;width:9px;height:1px;background:#c0c0c0;"></i><i style="left:436px;top:217px;width:11px;height:1px;background:#c0c0c0;"></i><i style="left:435px;top:218px;width:13px;height:1px;background:#c0c0c0;"></i><i style="left:441px;top:212px;width:1px;height:1px;background:#ffffff;"></i><i style="left:441px;top:212px;width:1px;height:1px;background:#000000;"></i><i style="left:440px;top:213px;width:1px;height:1px;background:#ffffff;"></i><i style="left:442px;top:213px;width:1px;height:1px;background:#000000;"></i><i style="left:441px;top:213px;width:1px;height:1px;background:#808080;"></i><i style="left:439px;top:214px;width:1px;height:1px;background:#ffffff;"></i><i style="left:443px;top:214px;width:1px;height:1px;background:#000000;"></i><i style="left:442px;top:214px;width:1px;height:1px;background:#808080;"></i><i style="left:438px;top:215px;width:1px;height:1px;background:#ffffff;"></i><i style="left:444px;top:215px;width:1px;height:1px;background:#000000;"></i><i style="left:443px;top:215px;width:1px;height:1px;background:#808080;"></i><i style="left:437px;top:216px;width:1px;height:1px;background:#ffffff;"></i><i style="left:445px;top:216px;width:1px;height:1px;background:#000000;"></i><i style="left:444px;top:216px;width:1px;height:1px;background:#808080;"></i><i style="left:436px;top:217px;width:1px;height:1px;background:#ffffff;"></i><i style="left:446px;top:217px;width:1px;height:1px;background:#000000;"></i><i style="left:445px;top:217px;width:1px;height:1px;background:#808080;"></i><i style="left:435px;top:218px;width:1px;height:1px;background:#ffffff;"></i><i style="left:447px;top:218px;width:1px;height:1px;background:#000000;"></i><i style="left:446px;top:218px;width:1px;height:1px;background:#808080;"></i><i style="left:434px;top:219px;width:1px;height:1px;background:#ffffff;"></i><i style="left:448px;top:219px;width:1px;height:1px;background:#000000;"></i><i style="left:447px;top:219px;width:1px;height:1px;background:#808080;"></i><i style="left:434px;top:219px;width:1px;height:13px;background:#ffffff;"></i><i style="left:448px;top:219px;width:1px;height:13px;background:#000000;"></i><i style="left:447px;top:220px;width:1px;height:12px;background:#808080;"></i><i style="left:544px;top:233px;width:50px;height:1px;background:#000000;"></i><i style="left:593px;top:210px;width:1px;height:24px;background:#000000;"></i><i style="left:545px;top:211px;width:48px;height:1px;background:#ffffff;"></i><i style="left:545px;top:211px;width:1px;height:22px;background:#ffffff;"></i><i style="left:547px;top:213px;width:44px;height:1px;background:#000000;"></i><i style="left:547px;top:230px;width:44px;height:1px;background:#000000;"></i><i style="left:547px;top:213px;width:1px;height:18px;background:#000000;"></i><i style="left:590px;top:213px;width:1px;height:18px;background:#000000;"></i><i style="left:548px;top:214px;width:42px;height:1px;background:#ffffff;"></i><i style="left:548px;top:229px;width:42px;height:1px;background:#ffffff;"></i><i style="left:548px;top:214px;width:1px;height:16px;background:#ffffff;"></i><i style="left:589px;top:214px;width:1px;height:16px;background:#ffffff;"></i><b class="t" style="left:553px;top:215px;color:#000;font-size:13.5px;line-height:14px;letter-spacing:0.5px;text-rendering:geometricPrecision;">Reset</b><i style="left:19px;top:243px;width:609px;height:1px;background:#ffffff;"></i><i style="left:19px;top:287px;width:609px;height:1px;background:#ffffff;"></i><i style="left:19px;top:243px;width:1px;height:45px;background:#ffffff;"></i><i style="left:627px;top:243px;width:1px;height:45px;background:#ffffff;"></i><i style="left:18px;top:242px;width:609px;height:1px;background:#808080;"></i><i style="left:18px;top:286px;width:609px;height:1px;background:#808080;"></i><i style="left:18px;top:242px;width:1px;height:45px;background:#808080;"></i><i style="left:626px;top:242px;width:1px;height:45px;background:#808080;"></i><b class="t" style="left:29px;top:249px;color:#000090;font-size:13.5px;line-height:14px;letter-spacing:-0.365px;text-rendering:geometricPrecision;">P<span style="letter-spacing:-0.865px">30</span> # CP<span style="letter-spacing:-0.865px">010189</span>,   <span style="letter-spacing:-0.865px">2007</span>:<span style="letter-spacing:-0.865px">12</span>:<span style="letter-spacing:-0.865px">01</span> <span style="letter-spacing:-0.865px">06</span>:<span style="letter-spacing:-0.865px">52</span>:<span style="letter-spacing:-0.865px">37</span>,   <span style="letter-spacing:-0.865px">6528</span>x<span style="letter-spacing:-0.865px">4872</span>pix</b><b class="t" style="left:29px;top:264px;color:#000090;font-size:13.5px;line-height:14px;letter-spacing:-0.303px;text-rendering:geometricPrecision;">ISO <span style="letter-spacing:-0.8029999999999999px">100</span>,   <span style="letter-spacing:-0.8029999999999999px">1</span>/<span style="letter-spacing:-0.8029999999999999px">900</span>s, Corr --<span style="letter-spacing:-0.8029999999999999px">1</span> <span style="letter-spacing:-0.8029999999999999px">1</span>/<span style="letter-spacing:-0.8029999999999999px">4</span> EV</b><b class="t" style="left:639px;top:243px;color:#007000;font-size:13.5px;line-height:14px;letter-spacing:0.067px;text-rendering:geometricPrecision;">Mapping function</b><i style="left:640px;top:264px;width:250px;height:23px;background:#ffffff;"></i><i style="left:640px;top:264px;width:250px;height:1px;background:#808080;"></i><i style="left:640px;top:264px;width:1px;height:23px;background:#808080;"></i><i style="left:641px;top:265px;width:248px;height:1px;background:#000000;"></i><i style="left:641px;top:265px;width:1px;height:21px;background:#000000;"></i><i style="left:640px;top:286px;width:250px;height:1px;background:#ffffff;"></i><i style="left:889px;top:264px;width:1px;height:23px;background:#ffffff;"></i><i style="left:641px;top:285px;width:248px;height:1px;background:#dfdfdf;"></i><i style="left:888px;top:265px;width:1px;height:21px;background:#dfdfdf;"></i><i style="left:865px;top:266px;width:23px;height:19px;background:#000000;"></i><i style="left:865px;top:266px;width:22px;height:18px;background:#dfdfdf;"></i><i style="left:866px;top:267px;width:21px;height:17px;background:#808080;"></i><i style="left:866px;top:267px;width:20px;height:16px;background:#ffffff;"></i><i style="left:867px;top:268px;width:19px;height:15px;background:#c0c0c0;"></i><svg style="position:absolute;left:871px;top:273px" width="11" height="6"><polygon points="0.5,0 10,0 5.25,5.5" fill="#000"/></svg><b class="t" style="left:644px;top:269px;color:#c00000;font-size:13.5px;line-height:14px;letter-spacing:-0.2px;text-rendering:geometricPrecision;">sRGB</b><b class="t" style="left:56px;top:296px;color:#c81414;font-size:15.5px;line-height:16px;font-weight:bold;-webkit-text-stroke:0;text-rendering:geometricPrecision;">Range</b><b class="t" style="left:51px;top:313px;color:#c81414;font-size:15.5px;line-height:16px;font-weight:bold;letter-spacing:0.167px;-webkit-text-stroke:0;text-rendering:geometricPrecision;">0:65535</b><b class="t" style="left:135px;top:295px;color:#0000cc;font-size:13.5px;line-height:14px;letter-spacing:-0.412px;text-rendering:geometricPrecision;">Black level min: <span style="letter-spacing:-0.9119999999999999px">0</span>, max: <span style="letter-spacing:-0.9119999999999999px">0</span>, avrg: <span style="letter-spacing:-0.9119999999999999px">0</span></b><b class="t" style="left:136px;top:310px;color:#0000cc;font-size:13.5px;line-height:14px;letter-spacing:-0.25px;text-rendering:geometricPrecision;">Current WB coefficients: (<span style="letter-spacing:-0.75px">1</span>.<span style="letter-spacing:-0.75px">0000</span>, <span style="letter-spacing:-0.75px">1</span>.<span style="letter-spacing:-0.75px">0000</span>, <span style="letter-spacing:-0.75px">1</span>.<span style="letter-spacing:-0.75px">0000</span>, <span style="letter-spacing:-0.75px">1</span>.<span style="letter-spacing:-0.75px">0000</span>)</b><i style="left:17px;top:333px;width:874px;height:1px;background:#cdcdcd;"></i><i style="left:17px;top:862px;width:874px;height:1px;background:#cdcdcd;"></i><i style="left:17px;top:333px;width:1px;height:530px;background:#cdcdcd;"></i><i style="left:890px;top:333px;width:1px;height:530px;background:#cdcdcd;"></i><i style="left:18px;top:334px;width:872px;height:528px;background:#000000;"></i><i style="left:20px;top:336px;width:868px;height:524px;background:#808080;"></i><i style="left:35px;top:349px;width:516px;height:132px;background:#000000;"></i><i style="left:30px;top:362px;width:5px;height:1px;background:#ffffff;"></i><i style="left:551px;top:362px;width:5px;height:1px;background:#ffffff;"></i><i style="left:30px;top:384px;width:5px;height:1px;background:#ffffff;"></i><i style="left:551px;top:384px;width:5px;height:1px;background:#ffffff;"></i><i style="left:30px;top:393px;width:5px;height:1px;background:#ffffff;"></i><i style="left:551px;top:393px;width:5px;height:1px;background:#ffffff;"></i><i style="left:30px;top:415px;width:5px;height:1px;background:#ffffff;"></i><i style="left:551px;top:415px;width:5px;height:1px;background:#ffffff;"></i><i style="left:30px;top:425px;width:5px;height:1px;background:#ffffff;"></i><i style="left:551px;top:425px;width:5px;height:1px;background:#ffffff;"></i><i style="left:30px;top:447px;width:5px;height:1px;background:#ffffff;"></i><i style="left:551px;top:447px;width:5px;height:1px;background:#ffffff;"></i><i style="left:30px;top:462px;width:5px;height:1px;background:#ffffff;"></i><i style="left:551px;top:462px;width:5px;height:1px;background:#ffffff;"></i><i style="left:44px;top:481px;width:2px;height:8px;background:#ffffff;"></i><i style="left:52px;top:481px;width:2px;height:8px;background:#ffffff;"></i><i style="left:68px;top:481px;width:2px;height:8px;background:#ffffff;"></i><i style="left:100px;top:481px;width:2px;height:8px;background:#ffffff;"></i><i style="left:164px;top:481px;width:2px;height:8px;background:#ffffff;"></i><i style="left:292px;top:481px;width:2px;height:8px;background:#ffffff;"></i><i style="left:117px;top:481px;width:1px;height:5px;background:#ffffff;"></i><i style="left:138px;top:481px;width:1px;height:5px;background:#ffffff;"></i><i style="left:197px;top:481px;width:1px;height:5px;background:#ffffff;"></i><i style="left:240px;top:481px;width:1px;height:5px;background:#ffffff;"></i><i style="left:359px;top:481px;width:1px;height:5px;background:#ffffff;"></i><i style="left:443px;top:481px;width:1px;height:5px;background:#ffffff;"></i><svg style="position:absolute;left:35px;top:349px" width="516" height="132"><polygon points="2,130 2.0,43.0 3.0,43.0 4.0,40.0 5.0,46.0 6.0,51.0 7.0,49.0 8.0,45.5 9.0,43.3 10.0,42.8 11.0,43.7 12.0,45.5 13.0,48.3 14.0,50.0 15.0,52.4 16.0,55.5 17.0,58.3 18.0,60.0 19.0,61.0 20.0,60.0 21.0,58.7 23.0,57.8 25.0,56.5 27.0,53.3 29.0,49.6 31.0,52.0 33.0,55.0 35.0,57.4 37.0,60.0 39.0,61.0 41.0,62.8 43.0,66.0 45.0,68.3 47.0,71.0 49.0,73.7 51.0,76.5 53.0,78.7 55.0,80.0 57.0,81.5 59.0,83.7 61.0,84.6 63.0,86.5 65.0,89.2 67.8,91.3 73.8,94.3 77.8,97.8 83.7,100.2 89.6,103.7 94.6,106.7 99.6,107.7 103.5,109.2 107.5,111.6 113.4,114.6 117.4,117.1 121.4,120.6 126.3,123.0 129.3,125.5 133.3,128.5 133.8,129 133.8,130" fill="#c00000"/></svg><i style="left:168px;top:478px;width:289px;height:1px;background:#c00000;"></i><i style="left:458px;top:478px;width:18px;height:1px;background:#c00000;"></i><i style="left:477px;top:478px;width:6px;height:1px;background:#c00000;"></i><i style="left:484px;top:478px;width:13px;height:1px;background:#c00000;"></i><i style="left:498px;top:478px;width:4px;height:1px;background:#c00000;"></i><i style="left:503px;top:478px;width:7px;height:1px;background:#c00000;"></i><i style="left:511px;top:478px;width:4px;height:1px;background:#c00000;"></i><i style="left:516px;top:478px;width:1px;height:1px;background:#c00000;"></i><i style="left:520px;top:478px;width:7px;height:1px;background:#c00000;"></i><i style="left:528px;top:478px;width:2px;height:1px;background:#c00000;"></i><i style="left:531px;top:478px;width:3px;height:1px;background:#c00000;"></i><i style="left:535px;top:478px;width:2px;height:1px;background:#c00000;"></i><i style="left:538px;top:478px;width:1px;height:1px;background:#c00000;"></i><i style="left:540px;top:478px;width:6px;height:1px;background:#c00000;"></i><i style="left:544px;top:455px;width:1px;height:24px;background:#c00000;"></i><i style="left:543px;top:472px;width:1px;height:7px;background:#c00000;"></i><i style="left:35px;top:504px;width:516px;height:132px;background:#000000;"></i><i style="left:30px;top:517px;width:5px;height:1px;background:#ffffff;"></i><i style="left:551px;top:517px;width:5px;height:1px;background:#ffffff;"></i><i style="left:30px;top:539px;width:5px;height:1px;background:#ffffff;"></i><i style="left:551px;top:539px;width:5px;height:1px;background:#ffffff;"></i><i style="left:30px;top:548px;width:5px;height:1px;background:#ffffff;"></i><i style="left:551px;top:548px;width:5px;height:1px;background:#ffffff;"></i><i style="left:30px;top:570px;width:5px;height:1px;background:#ffffff;"></i><i style="left:551px;top:570px;width:5px;height:1px;background:#ffffff;"></i><i style="left:30px;top:580px;width:5px;height:1px;background:#ffffff;"></i><i style="left:551px;top:580px;width:5px;height:1px;background:#ffffff;"></i><i style="left:30px;top:602px;width:5px;height:1px;background:#ffffff;"></i><i style="left:551px;top:602px;width:5px;height:1px;background:#ffffff;"></i><i style="left:30px;top:617px;width:5px;height:1px;background:#ffffff;"></i><i style="left:551px;top:617px;width:5px;height:1px;background:#ffffff;"></i><i style="left:44px;top:636px;width:2px;height:8px;background:#ffffff;"></i><i style="left:52px;top:636px;width:2px;height:8px;background:#ffffff;"></i><i style="left:68px;top:636px;width:2px;height:8px;background:#ffffff;"></i><i style="left:100px;top:636px;width:2px;height:8px;background:#ffffff;"></i><i style="left:164px;top:636px;width:2px;height:8px;background:#ffffff;"></i><i style="left:292px;top:636px;width:2px;height:8px;background:#ffffff;"></i><i style="left:117px;top:636px;width:1px;height:5px;background:#ffffff;"></i><i style="left:138px;top:636px;width:1px;height:5px;background:#ffffff;"></i><i style="left:197px;top:636px;width:1px;height:5px;background:#ffffff;"></i><i style="left:240px;top:636px;width:1px;height:5px;background:#ffffff;"></i><i style="left:359px;top:636px;width:1px;height:5px;background:#ffffff;"></i><i style="left:443px;top:636px;width:1px;height:5px;background:#ffffff;"></i><svg style="position:absolute;left:35px;top:504px" width="516" height="132"><polygon points="2,130 2.0,84.0 2.5,84.0 3.0,43.0 4.0,43.0 4.0,56.0 5.5,55.0 6.0,48.0 7.5,47.0 8.6,56.0 9.4,63.0 10.9,60.0 13.2,61.0 14.5,58.0 15.5,54.0 18.6,50.0 21.4,51.0 24.1,54.0 26.8,58.0 28.6,64.0 30.5,70.5 32.3,74.0 34.5,74.0 39.5,67.4 43.2,67.0 45.9,65.0 52.3,59.0 56.4,55.0 59.5,57.4 65.5,62.8 70.0,65.4 73.3,67.0 76.6,72.0 81.0,77.5 88.7,84.6 93.1,87.4 100.8,95.6 108.5,100.0 115.2,103.9 120.7,106.1 125.1,109.4 132.8,111.1 140.5,114.4 147.1,118.8 153.7,124.3 159.8,128.7 160.3,129 160.3,130" fill="#00a000"/></svg><i style="left:194px;top:633px;width:290px;height:1px;background:#00a000;"></i><i style="left:485px;top:633px;width:9px;height:1px;background:#00a000;"></i><i style="left:495px;top:633px;width:16px;height:1px;background:#00a000;"></i><i style="left:512px;top:633px;width:8px;height:1px;background:#00a000;"></i><i style="left:521px;top:633px;width:1px;height:1px;background:#00a000;"></i><i style="left:523px;top:633px;width:10px;height:1px;background:#00a000;"></i><i style="left:534px;top:633px;width:3px;height:1px;background:#00a000;"></i><i style="left:540px;top:633px;width:1px;height:1px;background:#00a000;"></i><i style="left:543px;top:633px;width:6px;height:1px;background:#00a000;"></i><i style="left:548px;top:606px;width:1px;height:28px;background:#00a000;"></i><i style="left:35px;top:659px;width:516px;height:132px;background:#000000;"></i><i style="left:30px;top:672px;width:5px;height:1px;background:#ffffff;"></i><i style="left:551px;top:672px;width:5px;height:1px;background:#ffffff;"></i><i style="left:30px;top:694px;width:5px;height:1px;background:#ffffff;"></i><i style="left:551px;top:694px;width:5px;height:1px;background:#ffffff;"></i><i style="left:30px;top:703px;width:5px;height:1px;background:#ffffff;"></i><i style="left:551px;top:703px;width:5px;height:1px;background:#ffffff;"></i><i style="left:30px;top:725px;width:5px;height:1px;background:#ffffff;"></i><i style="left:551px;top:725px;width:5px;height:1px;background:#ffffff;"></i><i style="left:30px;top:735px;width:5px;height:1px;background:#ffffff;"></i><i style="left:551px;top:735px;width:5px;height:1px;background:#ffffff;"></i><i style="left:30px;top:757px;width:5px;height:1px;background:#ffffff;"></i><i style="left:551px;top:757px;width:5px;height:1px;background:#ffffff;"></i><i style="left:30px;top:772px;width:5px;height:1px;background:#ffffff;"></i><i style="left:551px;top:772px;width:5px;height:1px;background:#ffffff;"></i><i style="left:44px;top:791px;width:2px;height:8px;background:#ffffff;"></i><i style="left:52px;top:791px;width:2px;height:8px;background:#ffffff;"></i><i style="left:68px;top:791px;width:2px;height:8px;background:#ffffff;"></i><i style="left:100px;top:791px;width:2px;height:8px;background:#ffffff;"></i><i style="left:164px;top:791px;width:2px;height:8px;background:#ffffff;"></i><i style="left:292px;top:791px;width:2px;height:8px;background:#ffffff;"></i><i style="left:117px;top:791px;width:1px;height:5px;background:#ffffff;"></i><i style="left:138px;top:791px;width:1px;height:5px;background:#ffffff;"></i><i style="left:197px;top:791px;width:1px;height:5px;background:#ffffff;"></i><i style="left:240px;top:791px;width:1px;height:5px;background:#ffffff;"></i><i style="left:359px;top:791px;width:1px;height:5px;background:#ffffff;"></i><i style="left:443px;top:791px;width:1px;height:5px;background:#ffffff;"></i><svg style="position:absolute;left:35px;top:659px" width="516" height="132"><polygon points="2,130 2.0,55.0 3.0,55.0 3.4,44.0 4.3,48.0 5.0,48.0 5.5,41.0 6.2,41.0 6.6,53.7 9.3,53.7 10.7,47.6 12.7,43.5 15.4,42.8 17.5,48.3 18.9,56.4 20.2,66.0 21.6,68.7 23.6,60.5 27.7,53.7 31.8,51.7 35.9,47.6 37.9,46.9 41.3,51.7 43.4,59.2 45.4,70.0 47.5,82.3 50.9,90.5 55.0,97.3 57.7,102.8 60.4,112.3 63.1,121.9 65.2,128.0 65.7,129 65.7,130" fill="#0000ff"/></svg><i style="left:100px;top:788px;width:94px;height:1px;background:#0000ff;"></i><i style="left:194px;top:788px;width:16px;height:1px;background:#0000ff;"></i><i style="left:211px;top:788px;width:18px;height:1px;background:#0000ff;"></i><i style="left:230px;top:788px;width:8px;height:1px;background:#0000ff;"></i><i style="left:240px;top:788px;width:6px;height:1px;background:#0000ff;"></i><i style="left:248px;top:788px;width:2px;height:1px;background:#0000ff;"></i><i style="left:252px;top:788px;width:1px;height:1px;background:#0000ff;"></i><i style="left:253px;top:788px;width:9px;height:1px;background:#0000ff;"></i><i style="left:263px;top:788px;width:7px;height:1px;background:#0000ff;"></i><i style="left:271px;top:788px;width:3px;height:1px;background:#0000ff;"></i><i style="left:276px;top:788px;width:3px;height:1px;background:#0000ff;"></i><i style="left:283px;top:788px;width:1px;height:1px;background:#0000ff;"></i><i style="left:287px;top:788px;width:1px;height:1px;background:#0000ff;"></i><i style="left:290px;top:788px;width:5px;height:1px;background:#0000ff;"></i><i style="left:300px;top:788px;width:1px;height:1px;background:#0000ff;"></i><i style="left:303px;top:788px;width:4px;height:1px;background:#0000ff;"></i><i style="left:310px;top:788px;width:2px;height:1px;background:#0000ff;"></i><i style="left:314px;top:788px;width:3px;height:1px;background:#0000ff;"></i><i style="left:318px;top:788px;width:8px;height:1px;background:#0000ff;"></i><i style="left:329px;top:788px;width:2px;height:1px;background:#0000ff;"></i><i style="left:334px;top:788px;width:1px;height:1px;background:#0000ff;"></i><i style="left:338px;top:788px;width:3px;height:1px;background:#0000ff;"></i><i style="left:342px;top:788px;width:5px;height:1px;background:#0000ff;"></i><i style="left:348px;top:788px;width:3px;height:1px;background:#0000ff;"></i><i style="left:351px;top:788px;width:10px;height:1px;background:#0000ff;"></i><i style="left:364px;top:788px;width:6px;height:1px;background:#0000ff;"></i><i style="left:371px;top:788px;width:4px;height:1px;background:#0000ff;"></i><i style="left:377px;top:788px;width:2px;height:1px;background:#0000ff;"></i><i style="left:382px;top:788px;width:5px;height:1px;background:#0000ff;"></i><i style="left:391px;top:788px;width:1px;height:1px;background:#0000ff;"></i><i style="left:394px;top:788px;width:1px;height:1px;background:#0000ff;"></i><i style="left:399px;top:788px;width:2px;height:1px;background:#0000ff;"></i><i style="left:405px;top:788px;width:2px;height:1px;background:#0000ff;"></i><i style="left:412px;top:788px;width:2px;height:1px;background:#0000ff;"></i><i style="left:417px;top:788px;width:2px;height:1px;background:#0000ff;"></i><i style="left:427px;top:788px;width:5px;height:1px;background:#0000ff;"></i><i style="left:432px;top:788px;width:5px;height:1px;background:#0000ff;"></i><i style="left:437px;top:788px;width:4px;height:1px;background:#0000ff;"></i><i style="left:443px;top:788px;width:2px;height:1px;background:#0000ff;"></i><i style="left:456px;top:788px;width:4px;height:1px;background:#0000ff;"></i><i style="left:468px;top:788px;width:5px;height:1px;background:#0000ff;"></i><i style="left:483px;top:788px;width:4px;height:1px;background:#0000ff;"></i><i style="left:491px;top:788px;width:3px;height:1px;background:#0000ff;"></i><i style="left:496px;top:788px;width:3px;height:1px;background:#0000ff;"></i><i style="left:508px;top:788px;width:1px;height:1px;background:#0000ff;"></i><i style="left:513px;top:788px;width:1px;height:1px;background:#0000ff;"></i><i style="left:518px;top:788px;width:1px;height:1px;background:#0000ff;"></i><i style="left:520px;top:788px;width:2px;height:1px;background:#0000ff;"></i><i style="left:526px;top:788px;width:3px;height:1px;background:#0000ff;"></i><i style="left:533px;top:788px;width:2px;height:1px;background:#0000ff;"></i><i style="left:546px;top:788px;width:4px;height:1px;background:#0000ff;"></i><i style="left:548px;top:761px;width:1px;height:28px;background:#0000ff;"></i>
</body></html>
